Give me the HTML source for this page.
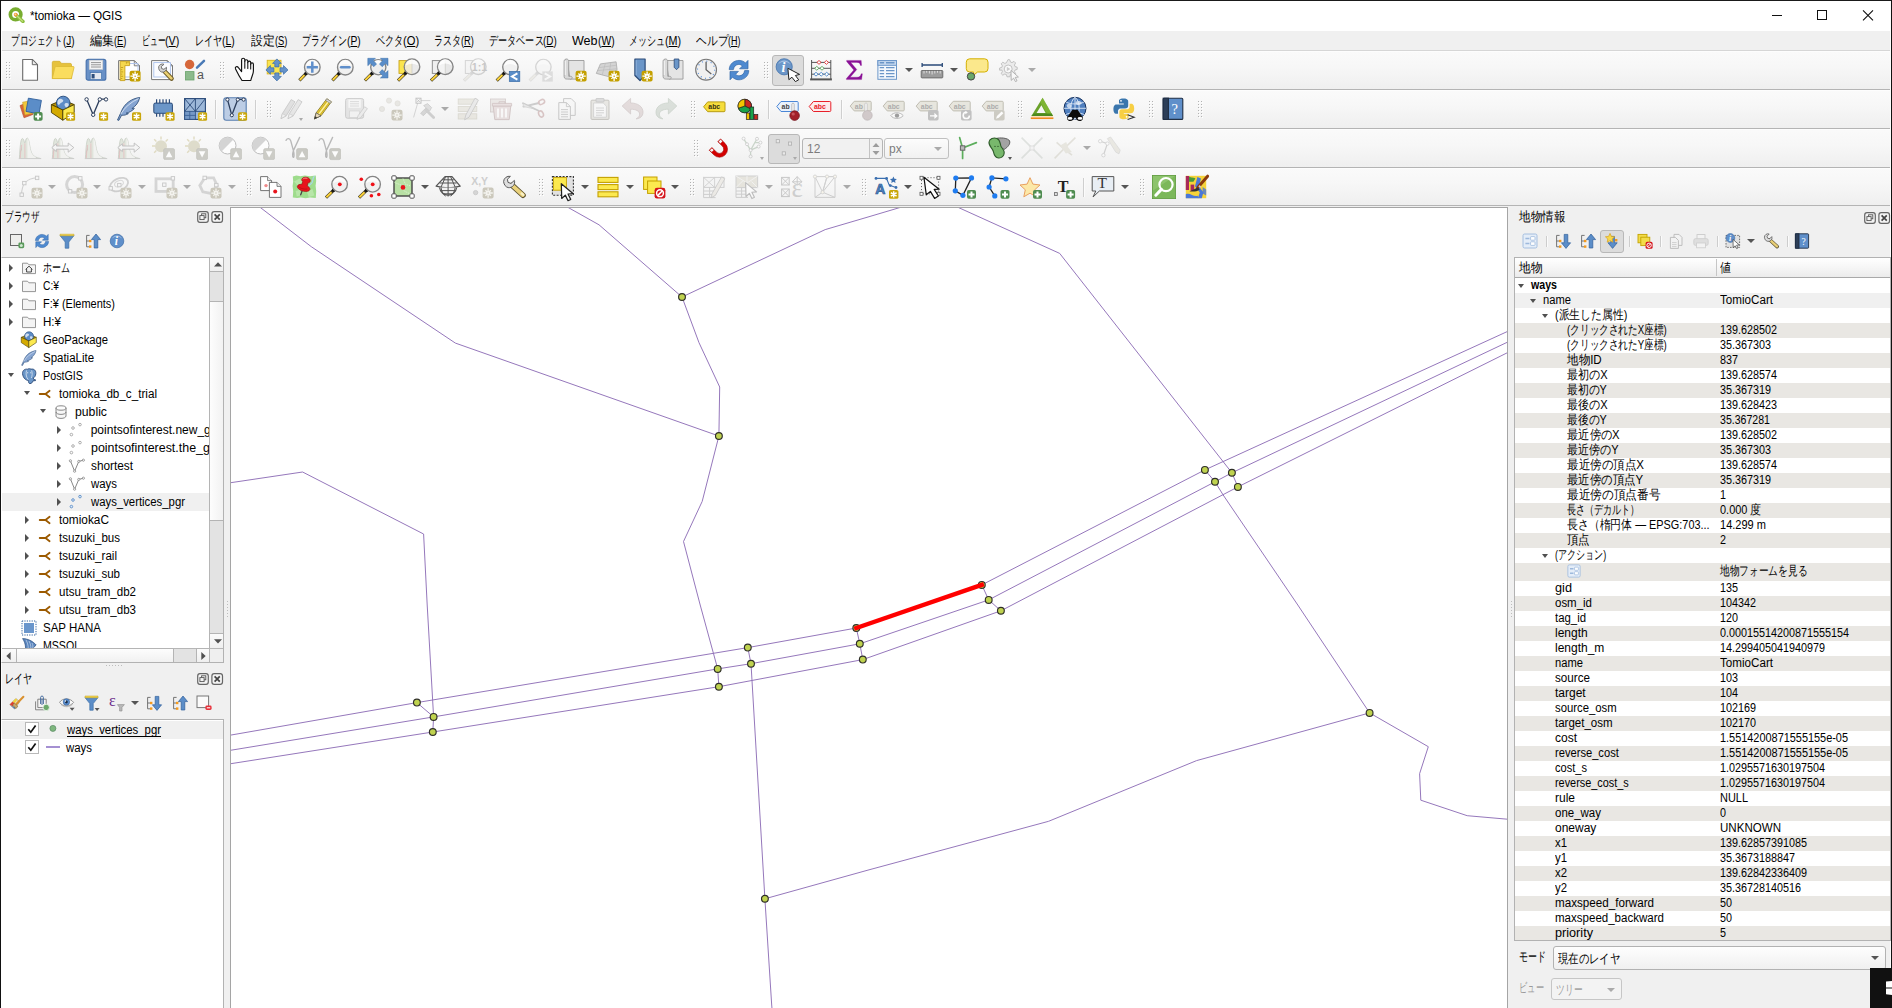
<!DOCTYPE html><html lang="ja"><head><meta charset="utf-8"><title>*tomioka — QGIS</title><style>
*{box-sizing:border-box;margin:0;padding:0}
html,body{width:1892px;height:1008px;overflow:hidden;background:#f0f0f0;font-family:"Liberation Sans",sans-serif;font-size:12px;color:#000}
.abs{position:absolute}
#win{position:absolute;left:0;top:0;width:1892px;height:1008px;overflow:hidden;background:#f0f0f0}
#title{position:absolute;left:0;top:0;width:1892px;height:31px;background:#fff}
#title .t{position:absolute;left:30px;top:9px;font-size:12.4px;line-height:15px;white-space:nowrap;letter-spacing:-0.1px}
#menu{position:absolute;left:0;top:31px;width:1892px;height:19px;background:#f0f0f0}
#menu span{position:absolute;top:1.5px;line-height:16px;font-size:13px;white-space:nowrap}
#menu u{text-decoration:underline;text-underline-offset:1px}
.tb{position:absolute;left:1px;width:1890px;height:39px;background:linear-gradient(#fafafa,#f7f7f7 40%,#efefef);border-bottom:1px solid #b4b4b4;border-top:1px solid #fdfdfd}
.hd{position:absolute;width:1px;height:1px;background:#b2b2b2;box-shadow:1px 1px #fff,3px 0px #b2b2b2,4px 1px #fff,0px 3px #b2b2b2,1px 4px #fff,3px 3px #b2b2b2,4px 4px #fff,0px 6px #b2b2b2,1px 7px #fff,3px 6px #b2b2b2,4px 7px #fff,0px 9px #b2b2b2,1px 10px #fff,3px 9px #b2b2b2,4px 10px #fff,0px 12px #b2b2b2,1px 13px #fff,3px 12px #b2b2b2,4px 13px #fff,0px 15px #b2b2b2,1px 16px #fff,3px 15px #b2b2b2,4px 16px #fff}
.vsep{position:absolute;width:1px;height:19px;background:#cfcfcf;box-shadow:1px 0 0 #fbfbfb}
.ic{position:absolute;width:24px;height:24px;overflow:visible}
.ic16{position:absolute;width:16px;height:16px;overflow:visible}
.dd{position:absolute;width:0;height:0;border-left:4px solid transparent;border-right:4px solid transparent;border-top:4px solid #555}
.dd.dis{border-top-color:#aaa}
.dds{position:absolute;width:0;height:0;border-left:2.5px solid transparent;border-right:2.5px solid transparent;border-top:3px solid #555}
.dds.dis{border-top-color:#aaa}
.pressed{position:absolute;background:#dcdcdc;border:1px solid #b8b8b8;border-radius:3px}
.ptitle{position:absolute;font-size:12px;line-height:14px;white-space:nowrap}
.pbtn{position:absolute;width:11px;height:11px;border:1.3px solid #6a6a6a;border-radius:2.5px}
.frame{position:absolute;background:#fff;border:1px solid #b2b2b2;overflow:hidden}
.row{position:absolute;left:0;height:18px;line-height:18px;white-space:nowrap;font-size:12px}
.row .tx{position:absolute;top:0;white-space:nowrap}
.tri-r{position:absolute;width:0;height:0;border-top:4px solid transparent;border-bottom:4px solid transparent;border-left:4.5px solid #505050}
.tri-d{position:absolute;width:0;height:0;border-left:3.800px solid transparent;border-right:3.800px solid transparent;border-top:4px solid #505050}
.sbv{position:absolute;background:#e3e3e3;border-left:1px solid #b6b6b6}
.thumb{position:absolute;background:linear-gradient(90deg,#fdfdfd,#f1f1f1);border:1px solid #b4b4b4}
.thumbh{position:absolute;background:linear-gradient(#fdfdfd,#f1f1f1);border:1px solid #b4b4b4}
.sbtn{position:absolute;background:linear-gradient(#fbfbfb,#efefef);border:1px solid #b4b4b4}
.chk{position:absolute;width:14px;height:14px;background:#fff;border:1px solid #b5b5b5}
.r15{position:absolute;left:0;width:100%;height:15px;line-height:15px;font-size:12px;white-space:nowrap}
.r15 .k{position:absolute;top:0}
.r15 .v{position:absolute;top:0;left:205px}
.alt{background:#e9e7e3}
.combo{position:absolute;border:1px solid #b2b2b2;border-radius:3px;background:linear-gradient(#fefefe,#f0f0f0);font-size:12px}
</style></head><body><div id="win">
<svg width="0" height="0" style="position:absolute"><defs>
<symbol id="i-new" viewBox="0 0 24 24" overflow="visible"><path d="M4.7 1.5h9.6l5.2 5.2v15.6H4.7z" fill="#fff" stroke="#6a6a6a" stroke-width="1.1" stroke-linejoin="round"/><path d="M14.3 1.5v5.2h5.2z" fill="#ececec" stroke="#6a6a6a" stroke-width="1" stroke-linejoin="round"/></symbol>
<symbol id="i-open" viewBox="0 0 24 24" overflow="visible"><path d="M1.3 4.6q0-1.3 1.3-1.3h5.6q0.900 0 1.300 0.800l0.700 1.300h9q1.300 0 1.300 1.300v13.800H1.300z" fill="#e6c23c" stroke="#d3ad2a" stroke-width="0.800"/><path d="M1.300 20.600L3.900 9.500q0.300-1 1.300-1h16.900q1.200 0 0.900 1.100L20.400 20.600z" fill="#fadd5e" stroke="#dcb935" stroke-width="0.800"/></symbol>
<symbol id="i-save" viewBox="0 0 24 24" overflow="visible"><rect x="2.2" y="1.4" width="19.6" height="20.8" rx="2" fill="#6890c6" stroke="#4a74ae" stroke-width="1.200"/><rect x="5.2" y="2.2" width="13.6" height="9.2" fill="#f4f4f4" stroke="#c9c9c9" stroke-width="0.6"/><path d="M7 4.6h10M7 6.8h10M7 9h10" stroke="#8a8a8a" stroke-width="0.9"/><rect x="6.2" y="14.6" width="11.4" height="7" fill="#e4e9f0" stroke="#3f6fa8" stroke-width="0.7"/><rect x="7.6" y="16" width="3" height="4.4" fill="#2e4f7c"/></symbol>
<symbol id="i-newLayout" viewBox="0 0 24 24" overflow="visible"><path d="M1.600 2.600h15.700l5.200 5.200v13.800H1.600z" fill="#fff" stroke="#777" stroke-width="1"/><path d="M17.300 2.600v5.200h5.200z" fill="#eee" stroke="#777" stroke-width="0.900"/><path d="M8 5.500h13v13.500H8" fill="none" stroke="#a9c0ec" stroke-width="0.900"/><path d="M3.200 3.300h9.400v4.300H7.900v15H3.200z" fill="#f5d84e" stroke="#c9a31c" stroke-width="0.900"/><path d="M3.900 9.500h2.200M3.900 11.700h1.400M3.900 13.900h2.200M3.900 16.100h1.400M3.900 18.300h2.200M3.900 20.500h1.400M9.400 4v1.700M11 4v1.200" stroke="#b08c10" stroke-width="0.700"/><rect x="12.6" y="12.8" width="11" height="10.8" rx="2" fill="#c4a000"/><path d="M18.10 18.20L22.80 18.20M18.10 18.20L20.79 20.89M18.10 18.20L18.10 22.90M18.10 18.20L15.41 20.89M18.10 18.20L13.40 18.20M18.10 18.20L15.41 15.51M18.10 18.20L18.10 13.50M18.10 18.20L20.79 15.51" stroke="#fff" stroke-width="1.3"/><circle cx="18.1" cy="18.200000000000003" r="2.2" fill="#fff"/><circle cx="18.1" cy="18.200000000000003" r="0.75" fill="#c4a000"/></symbol>
<symbol id="i-layoutMgr" viewBox="0 0 24 24" overflow="visible"><path d="M1.600 2.600h15.700l5.200 5.200v13.800H1.600z" fill="#fff" stroke="#777" stroke-width="1"/><path d="M17.300 2.600v5.200h5.200z" fill="#eee" stroke="#777" stroke-width="0.900"/><rect x="3.800" y="4.600" width="16.600" height="14.400" fill="#fbfcff" stroke="#a9c0ec" stroke-width="0.900"/><path d="M14.600 13.400l7 7.200" stroke="#6d5a24" stroke-width="4.400" stroke-linecap="round"/><path d="M14.800 13.600l6.600 6.800" stroke="#e9cf72" stroke-width="2.700" stroke-linecap="round"/><path d="M8.700 8.600a4 4 0 0 1 5.300-2.300l-2.600 2.100 0.300 2.200 2.200 0.700 2.600-2a4 4 0 0 1-5 4.700c-1.800-0.500-3.200-2.700-2.800-5.400z" fill="#d4d4d4" stroke="#6a6a6a" stroke-width="0.900"/></symbol>
<symbol id="i-styleMgr" viewBox="0 0 24 24" overflow="visible"><circle cx="6.600" cy="6.500" r="4.700" fill="#d6673a"/><rect x="2.400" y="13.600" width="8.600" height="8.400" fill="#8cba8c" stroke="#6aa36b" stroke-width="0.800"/><path d="M14 9.700l7-6.800" stroke="#4a7ab6" stroke-width="2.500" stroke-linecap="round"/><text x="14" y="21" font-size="12.500" font-family="Liberation Sans, sans-serif" fill="#555">a</text></symbol>
<symbol id="i-pan" viewBox="0 0 24 24" overflow="visible"><path d="M10 22.500h8.800c0.600-3.600 2.600-6 2.600-9.600V6.300c0-1.900-2.700-1.900-2.700 0V4.600c0-1.900-2.900-1.900-2.900 0V3.200c0-1.900-3-1.900-3 0V1.700c0-2-3.200-2-3.200 0v11.900L6.200 9.400c-1-1.600-3.500-0.500-2.700 1.300 1.600 3.300 3 6.400 6.500 11.800z" fill="#fff" stroke="#111" stroke-width="1.150" stroke-linejoin="round"/><path d="M12.800 3.200v7M15.800 4.600v5.800M18.700 6.300v4.700" stroke="#111" stroke-width="1.050" stroke-linecap="round"/></symbol>
<symbol id="i-panSel" viewBox="0 0 24 24" overflow="visible"><rect x="2.200" y="2.300" width="13.800" height="13.600" fill="#fbe54e" stroke="#d9b21e" stroke-width="0.900"/><g fill="#6592c9" stroke="#3b6ea8" stroke-width="0.7" stroke-linejoin="round"><path d="M11.900 0.900l4.400 4.500h-2.300v3.500h-4.200V5.400H7.500z"/><path d="M11.900 22.900l4.400-4.500h-2.300v-3.500h-4.200v3.500H7.500z"/><path d="M0.900 11.900l4.500-4.400v2.300h3.500v4.200H5.400v2.300z"/><path d="M23 11.900l-4.500-4.400v2.300H15v4.200h3.500v2.300z"/></g></symbol>
<symbol id="i-zoomIn" viewBox="0 0 24 24" overflow="visible"><g opacity="1"><path d="M8.43 15.07L1.4 22.3" stroke="#3a3420" stroke-width="3.1"/><path d="M6.46 17.09L1.75 21.95" stroke="#fbd23a" stroke-width="2"/><circle cx="8.23" cy="15.27" r="1.75" fill="#111"/><circle cx="14.3" cy="9.2" r="7.8" fill="#efefef" fill-opacity="0.96" stroke="#858585" stroke-width="1.35"/><path d="M8.100000000000001 7.999999999999999a6.199999999999999 6.199999999999999 0 0 1 12.399999999999999 0a11.8 11.8 0 0 0 -12.399999999999999 0" fill="#fff" opacity="0.8"/></g><path d="M14.300 3.600v11.200M8.700 9.200h11.200" stroke="#5f8fcb" stroke-width="2.500"/></symbol>
<symbol id="i-zoomOut" viewBox="0 0 24 24" overflow="visible"><g opacity="1"><path d="M8.43 15.07L1.4 22.3" stroke="#3a3420" stroke-width="3.1"/><path d="M6.46 17.09L1.75 21.95" stroke="#fbd23a" stroke-width="2"/><circle cx="8.23" cy="15.27" r="1.75" fill="#111"/><circle cx="14.3" cy="9.2" r="7.8" fill="#efefef" fill-opacity="0.96" stroke="#858585" stroke-width="1.35"/><path d="M8.100000000000001 7.999999999999999a6.199999999999999 6.199999999999999 0 0 1 12.399999999999999 0a11.8 11.8 0 0 0 -12.399999999999999 0" fill="#fff" opacity="0.8"/></g><path d="M10.100 9.200h8.400" stroke="#5f8fcb" stroke-width="2.400" stroke-linecap="round"/></symbol>
<symbol id="i-zoomFull" viewBox="0 0 24 24" overflow="visible"><g opacity="1"><path d="M8.57 14.93L0.9 22.5" stroke="#3a3420" stroke-width="3.1"/><path d="M6.42 17.05L1.25 22.15" stroke="#fbd23a" stroke-width="2"/><circle cx="8.37" cy="15.13" r="1.75" fill="#111"/><circle cx="14.3" cy="9.2" r="7.6" fill="#ededed" fill-opacity="0.96" stroke="#858585" stroke-width="1.35"/><path d="M8.3 7.999999999999999a6.0 6.0 0 0 1 12.0 0a11.6 11.6 0 0 0 -12.0 0" fill="#fff" opacity="0.8"/></g><g fill="#5a8dc8" stroke="#3b6ea8" stroke-width="0.500"><path d="M3.800 0.300h7.600l-2.200 2.200 3.400 3.400-2.800 2.800-3.400-3.400-2.600 2.400z"/><path d="M24 0.300v7.400l-2.400-2.400-3.400 3.400-2.800-2.800 3.400-3.400-2.400-2.200z"/><path d="M24 20v-7.400l-2.400 2.400-3.400-3.400-2.800 2.800 3.400 3.400-2.400 2.200z"/></g></symbol>
<symbol id="i-zoomSel" viewBox="0 0 24 24" overflow="visible"><rect x="2" y="2.600" width="9" height="12.800" fill="#fbe54e" stroke="#c9a31c" stroke-width="0.900"/><g opacity="1"><path d="M9.13 14.67L1 22.6" stroke="#3a3420" stroke-width="3.1"/><path d="M6.85 16.89L1.35 22.25" stroke="#fbd23a" stroke-width="2"/><circle cx="8.93" cy="14.87" r="1.75" fill="#111"/><circle cx="15" cy="8.8" r="7.8" fill="#e9e9e9" fill-opacity="0.96" stroke="#858585" stroke-width="1.35"/><path d="M15 1.7000000000000008A7.1 7.1 0 0 0 15 15.900000000000002z" fill="#f1ead0"/><path d="M15 1.7000000000000008v14.2" stroke="#c9c9c4" stroke-width="0.7"/><path d="M8.8 7.6000000000000005a6.199999999999999 6.199999999999999 0 0 1 12.399999999999999 0a11.8 11.8 0 0 0 -12.399999999999999 0" fill="#fff" opacity="0.8"/></g></symbol>
<symbol id="i-zoomLayer" viewBox="0 0 24 24" overflow="visible"><rect x="2.300" y="2.600" width="8" height="12.800" fill="#efefef" stroke="#858585" stroke-width="0.900"/><g opacity="1"><path d="M9.43 14.57L1 22.6" stroke="#3a3420" stroke-width="3.1"/><path d="M7.07 16.82L1.35 22.25" stroke="#fbd23a" stroke-width="2"/><circle cx="9.23" cy="14.77" r="1.75" fill="#111"/><circle cx="15.3" cy="8.7" r="7.8" fill="#e6e6e6" fill-opacity="0.96" stroke="#858585" stroke-width="1.35"/><path d="M15.3 1.5999999999999994A7.1 7.1 0 0 0 15.3 15.8z" fill="#f3f3f3"/><path d="M15.3 1.5999999999999994v14.2" stroke="#c9c9c4" stroke-width="0.7"/><path d="M9.100000000000001 7.499999999999999a6.199999999999999 6.199999999999999 0 0 1 12.399999999999999 0a11.8 11.8 0 0 0 -12.399999999999999 0" fill="#fff" opacity="0.8"/></g></symbol>
<symbol id="i-zoomNative" viewBox="0 0 24 24" overflow="visible"><g opacity="0.330"><rect x="2.300" y="2.600" width="8" height="12.800" fill="#efefef" stroke="#858585" stroke-width="0.900"/><g opacity="1"><path d="M9.43 14.57L1 22.6" stroke="#aaa" stroke-width="3.1"/><path d="M7.07 16.82L1.35 22.25" stroke="#d9d6c8" stroke-width="2"/><circle cx="9.23" cy="14.77" r="1.75" fill="#999"/><circle cx="15.3" cy="8.7" r="7.8" fill="#f3f3f3" fill-opacity="0.96" stroke="#858585" stroke-width="1.35"/><path d="M9.100000000000001 7.499999999999999a6.199999999999999 6.199999999999999 0 0 1 12.399999999999999 0a11.8 11.8 0 0 0 -12.399999999999999 0" fill="#fff" opacity="0.8"/></g><text x="8.800" y="12.500" font-size="10.600" font-weight="bold" font-family="Liberation Sans, sans-serif" fill="#666">1:1</text></g></symbol>
<symbol id="i-zoomLast" viewBox="0 0 24 24" overflow="visible"><g opacity="1"><path d="M8.60 14.90L0.7 22.6" stroke="#3a3420" stroke-width="3.1"/><path d="M6.39 17.05L1.05 22.25" stroke="#fbd23a" stroke-width="2"/><circle cx="8.40" cy="15.10" r="1.75" fill="#111"/><circle cx="14.4" cy="9.1" r="7.7" fill="#efefef" fill-opacity="0.96" stroke="#858585" stroke-width="1.35"/><path d="M8.3 7.8999999999999995a6.1 6.1 0 0 1 12.2 0a11.7 11.7 0 0 0 -12.2 0" fill="#fff" opacity="0.8"/></g><rect x="13.300" y="13.400" width="10.500" height="10.200" fill="#5a8dc8" stroke="#3b6ea8" stroke-width="0.700"/><path d="M21.400 15.300l-5.400 3.200 5.400 3.200" fill="none" stroke="#fff" stroke-width="2"/></symbol>
<symbol id="i-zoomNext" viewBox="0 0 24 24" overflow="visible"><g opacity="0.300"><g opacity="1"><path d="M8.60 14.90L0.7 22.6" stroke="#aaa" stroke-width="3.1"/><path d="M6.39 17.05L1.05 22.25" stroke="#d9d6c8" stroke-width="2"/><circle cx="8.40" cy="15.10" r="1.75" fill="#999"/><circle cx="14.4" cy="9.1" r="7.7" fill="#f3f3f3" fill-opacity="0.96" stroke="#858585" stroke-width="1.35"/><path d="M8.3 7.8999999999999995a6.1 6.1 0 0 1 12.2 0a11.7 11.7 0 0 0 -12.2 0" fill="#fff" opacity="0.8"/></g><rect x="13.300" y="13.400" width="10.500" height="10.200" fill="#a9a9a9"/><path d="M15.700 15.300l5.400 3.200-5.400 3.200" fill="none" stroke="#fff" stroke-width="2"/></g></symbol>
<symbol id="i-newMap" viewBox="0 0 24 24" overflow="visible"><path d="M4 2.500h17v18.600H7z" fill="#e4e4e4" stroke="#9a9a9a" stroke-width="0.900"/><path d="M3.400 1c-2.300 0-2.300 2.400-2.300 2.400v15c0 2.500 2 2.700 3.400 2.700h3c2.300 0 2.300-2.800 0-2.800H5.700V3.400c0-1.200-0.700-2.400-2.300-2.400z" fill="#d9d9d9" stroke="#9a9a9a" stroke-width="0.900"/><path d="M2.300 3v14" stroke="#f4f4f4" stroke-width="1"/><rect x="12.6" y="12.8" width="11" height="10.8" rx="2" fill="#c4a000"/><path d="M18.10 18.20L22.80 18.20M18.10 18.20L20.79 20.89M18.10 18.20L18.10 22.90M18.10 18.20L15.41 20.89M18.10 18.20L13.40 18.20M18.10 18.20L15.41 15.51M18.10 18.20L18.10 13.50M18.10 18.20L20.79 15.51" stroke="#fff" stroke-width="1.3"/><circle cx="18.1" cy="18.200000000000003" r="2.2" fill="#fff"/><circle cx="18.1" cy="18.200000000000003" r="0.75" fill="#c4a000"/></symbol>
<symbol id="i-new3D" viewBox="0 0 24 24" overflow="visible"><path d="M0.300 15.400L4.400 5.900l15.700-2.100 1 7.900-8.900 6.800z" fill="#d4d4d4" stroke="#aaa" stroke-width="0.800"/><path d="M2.800 9.600l17.800-2.400M1.600 12.600l19-1.800M9.400 5.200L6.200 16.900M14.800 4.500l-2 13" fill="none" stroke="#b9b9b9" stroke-width="0.600"/><rect x="12.6" y="12.8" width="11" height="10.8" rx="2" fill="#c4a000"/><path d="M18.10 18.20L22.80 18.20M18.10 18.20L20.79 20.89M18.10 18.20L18.10 22.90M18.10 18.20L15.41 20.89M18.10 18.20L13.40 18.20M18.10 18.20L15.41 15.51M18.10 18.20L18.10 13.50M18.10 18.20L20.79 15.51" stroke="#fff" stroke-width="1.3"/><circle cx="18.1" cy="18.200000000000003" r="2.2" fill="#fff"/><circle cx="18.1" cy="18.200000000000003" r="0.75" fill="#c4a000"/></symbol>
<symbol id="i-newBookmark" viewBox="0 0 24 24" overflow="visible"><path d="M5.900 1h10.200v16.500L11 22.500 5.900 17.500z" fill="#6b96c8" stroke="#2a4a78" stroke-width="1.200" stroke-linejoin="round"/><path d="M7.200 2.200v14.800" stroke="#8fb1da" stroke-width="1"/><rect x="12.6" y="12.8" width="11" height="10.8" rx="2" fill="#c4a000"/><path d="M18.10 18.20L22.80 18.20M18.10 18.20L20.79 20.89M18.10 18.20L18.10 22.90M18.10 18.20L15.41 20.89M18.10 18.20L13.40 18.20M18.10 18.20L15.41 15.51M18.10 18.20L18.10 13.50M18.10 18.20L20.79 15.51" stroke="#fff" stroke-width="1.3"/><circle cx="18.1" cy="18.200000000000003" r="2.2" fill="#fff"/><circle cx="18.1" cy="18.200000000000003" r="0.75" fill="#c4a000"/></symbol>
<symbol id="i-showBookmarks" viewBox="0 0 24 24" overflow="visible"><path d="M4 2.500h17v18.600H7z" fill="#e4e4e4" stroke="#9a9a9a" stroke-width="0.900"/><path d="M3.400 1c-2.300 0-2.300 2.400-2.300 2.400v15c0 2.500 2 2.700 3.400 2.700h3c2.300 0 2.300-2.800 0-2.800H5.700V3.400c0-1.200-0.700-2.400-2.300-2.400z" fill="#d9d9d9" stroke="#9a9a9a" stroke-width="0.900"/><path d="M2.300 3v14" stroke="#f4f4f4" stroke-width="1"/><path d="M12.200 1h4.700v8.300l-2.350 2.400-2.350-2.400z" fill="#6b96c8" stroke="#2a4a78" stroke-width="0.800"/></symbol>
<symbol id="i-temporal" viewBox="0 0 24 24" overflow="visible"><circle cx="12.100" cy="11.700" r="10.400" fill="#f0f0f0" stroke="#777" stroke-width="1.100"/><circle cx="12.100" cy="11.700" r="8.600" fill="none" stroke="#4a86d8" stroke-width="1.100" stroke-dasharray="1 3.503"/><path d="M12.100 3.800v8l5.200 4.200" fill="none" stroke="#606060" stroke-width="1.300"/></symbol>
<symbol id="i-refresh" viewBox="0 0 24 24" overflow="visible"><path d="M2.2 11.6C2.4 5.6 7.4 2.4 12 2.4c3 0 5 1.2 6.4 2.6l2.6-2.6v8.4h-8.4l2.8-2.8c-1-1-2.2-1.6-3.6-1.6-2.8 0-5 2-5.4 5.2z" fill="#4f8ad0" stroke="#2f65a6" stroke-width="0.7"/><path d="M21.8 12.6c-0.2 6-5.2 9.2-9.8 9.2-3 0-5-1.2-6.4-2.6L3 21.8v-8.4h8.4l-2.8 2.8c1 1 2.2 1.6 3.6 1.6 2.8 0 5-2 5.400-5.200z" fill="#4f8ad0" stroke="#2f65a6" stroke-width="0.7"/></symbol>
<symbol id="i-identify" viewBox="0 0 24 24" overflow="visible"><circle cx="8.200" cy="8.800" r="8.100" fill="#6b96c8" stroke="#4574ad" stroke-width="0.800"/><path d="M2.200 6a6.800 6.800 0 0 1 12 0a10 10 0 0 0-12 0" fill="#b4cbe8" opacity="0.800"/><text x="5.600" y="14" font-size="14" font-style="italic" font-weight="bold" font-family="Liberation Serif, serif" fill="#fff">i</text><path d="M11.900 10.300l1 11.400 3-2.500 3.500 4.400 3.300-1.800-3.300-4.300 4.200-1.100z" fill="#fff" stroke="#222" stroke-width="1" stroke-linejoin="round"/></symbol>
<symbol id="i-fieldCalc" viewBox="0 0 24 24" overflow="visible"><path d="M1.100 21.400h21.800" stroke="#555" stroke-width="2"/><path d="M2.600 2v19M21.800 2v19M2.600 4.400h19.200M2.600 10.300h19.200M2.600 16.200h19.200" stroke="#555" stroke-width="1" fill="none"/><path d="M7.9 4.4l2.100-1.900 2.100 1.900-2.100 1.900z" fill="#fff" stroke="#d33" stroke-width="0.900"/><path d="M15.299999999999999 4.4l2.100-1.900 2.100 1.900-2.100 1.900z" fill="#fff" stroke="#d33" stroke-width="0.900"/><path d="M5.699999999999999 10.3l2.100-1.900 2.100 1.900-2.100 1.900z" fill="#fff" stroke="#5aa55a" stroke-width="0.900"/><path d="M10.9 10.3l2.100-1.900 2.100 1.900-2.100 1.900z" fill="#fff" stroke="#5aa55a" stroke-width="0.900"/><path d="M4.9 16.2l2.100-1.900 2.100 1.900-2.100 1.900z" fill="#fff" stroke="#4a86c8" stroke-width="0.900"/><path d="M10.1 16.2l2.100-1.900 2.100 1.900-2.100 1.900z" fill="#fff" stroke="#4a86c8" stroke-width="0.900"/><path d="M15.6 16.2l2.100-1.900 2.100 1.900-2.100 1.900z" fill="#fff" stroke="#4a86c8" stroke-width="0.900"/></symbol>
<symbol id="i-sigma" viewBox="0 0 24 24" overflow="visible"><path d="M4.600 2.400h14.600l0.400 5h-1.200c-0.400-2.400-1.400-3-3.600-3H8.800l6 7.200-6.600 7.600h6.800c2.600 0 3.600-1 4.200-3.400h1.200l-0.800 5.800H4.400v-1l7.400-8.600-7.200-8.600z" fill="#8a1196" stroke="#8a1196" stroke-width="0.300"/></symbol>
<symbol id="i-attrTable" viewBox="0 0 24 24" overflow="visible"><rect x="2.900" y="2.600" width="18.600" height="18.700" fill="#f4f8fd" stroke="#6b96c8" stroke-width="1"/><rect x="2.900" y="2.600" width="18.600" height="4.700" fill="#c8daf0" stroke="#6b96c8" stroke-width="1"/><path d="M4.700 4.700h4.400M11 4.700h8.500" stroke="#6b96c8" stroke-width="1.500"/><path d="M4.700 9.700h4.400M11 9.700h8.500M4.700 12.700h4.400M11 12.700h8.500M4.700 15.700h4.400M11 15.700h8.500M4.700 18.700h4.400M11 18.700h8.500" stroke="#6b96c8" stroke-width="1.200"/></symbol>
<symbol id="i-measure" viewBox="0 0 24 24" overflow="visible"><path d="M2.100 5v3.900M22.300 5v3.900M2.100 7h20.200" stroke="#2a4a78" stroke-width="1.300"/><rect x="1.200" y="12.500" width="21.600" height="7.400" rx="0.800" fill="#9c9c9c" stroke="#666" stroke-width="0.900"/><path d="M4 12.900v2.600M6.700 12.900v1.800M9.400 12.900v2.600M12.100 12.900v3.600M14.800 12.900v2.600M17.500 12.900v1.800M20.200 12.900v2.600" stroke="#eee" stroke-width="0.800"/></symbol>
<symbol id="i-mapTips" viewBox="0 0 24 24" overflow="visible"><path d="M4.700 0.800h14.900q3.400 0 3.400 3.400v6.400q0 3.400-3.400 3.400h-7l-5.600 4.400 1.600-4.400h-3.900q-3.400 0-3.400-3.400V4.200q0-3.400 3.400-3.400z" fill="#fbe88c" stroke="#d4b000" stroke-width="1"/><circle cx="6" cy="18.400" r="3.700" fill="#6aa86a" stroke="#444" stroke-width="1"/></symbol>
<symbol id="i-actions" viewBox="0 0 24 24" overflow="visible"><g opacity="0.450"><path d="M10 1.600l1.800 0.200 0.600 2.200 1.600 0.600 2-1.200 1.600 1.600-1.200 2 0.600 1.600 2.200 0.600v2.200l-2.200 0.600-0.600 1.600 1.200 2-1.600 1.600-2-1.200-1.600 0.600-0.600 2.200H9l-0.600-2.200-1.600-0.600-2 1.200-1.600-1.600 1.200-2-0.600-1.600L1.600 12.200V10l2.200-0.600 0.600-1.600-1.200-2 1.600-1.600 2 1.200 1.600-0.600z" fill="#ddd" stroke="#777" stroke-width="0.900"/><circle cx="10.200" cy="11" r="4" fill="#fff" stroke="#777" stroke-width="0.900"/><path d="M8.800 8.800v4.400l3.600-2.200z" fill="#999"/><path d="M13 12.400l0.200 10 2.400-2.200 1.800 3.400 1.600-0.800-1.800-3.400 3.200-0.400z" fill="#fff" stroke="#555" stroke-width="0.900" stroke-linejoin="round"/></g></symbol>
<symbol id="i-dsm" viewBox="0 0 24 24" overflow="visible"><path d="M1 8.600l9-3.600 4 12.400-9 3.400z" fill="#d8653a" stroke="#b24d28" stroke-width="0.600"/><path d="M3.600 5.200l9.400-1.800 2.600 12.400-9.600 2.200z" fill="#f2c73c" stroke="#caa023" stroke-width="0.600"/><path d="M9.400 1.200l13 2.200-2.400 13.600-13-2.600z" fill="#5b8dc8" stroke="#2f5f9b" stroke-width="0.900"/><rect x="14.6" y="15" width="9" height="8.8" rx="1.8" fill="#4f8c50"/><path d="M19.1 16.4v6M16.1 19.4h6" stroke="#fff" stroke-width="2"/></symbol>
<symbol id="i-newGpkg" viewBox="0 0 24 24" overflow="visible"><path d="M0.400 7.600L11.800 2.800l11.400 4.800-11.400 5.400z" fill="#b8930a" stroke="#4a3c00" stroke-width="0.900" stroke-linejoin="round"/><circle cx="12.200" cy="6" r="6.800" fill="#5d8cc6" stroke="#24487a" stroke-width="0.900"/><path d="M7.600 2.600c1.800-1.600 3.400-0.400 4.400 0.400s-0.400 2.400-1.800 2.800-1.400 2.600-2.800 2-1.200-3.800 0.200-5.200zM14 6.400c1.200-0.800 3-0.600 3.600 0.400s-0.600 3.200-2 3.400-2.800-3-1.600-3.800z" fill="#e4ecf6" opacity="0.850"/><path d="M0.400 7.600l11.400 5.400v10.200L0.400 15.600z" fill="#d4aa00" stroke="#4a3c00" stroke-width="0.900" stroke-linejoin="round"/><path d="M23.200 7.600l-11.400 5.400v10.200l11.400-7.600z" fill="#fce94f" stroke="#4a3c00" stroke-width="0.900" stroke-linejoin="round"/><rect x="15" y="15.2" width="9.1" height="8.6" rx="1.6" fill="#c9a60a"/><path d="M19.55 16.3v6.4M16.650000000000002 17.85l5.8 3.3M22.45 17.85l-5.8 3.3" stroke="#fff" stroke-width="1.5"/></symbol>
<symbol id="i-newVector" viewBox="0 0 24 24" overflow="visible"><path d="M2.600 2.200l6.600 15.600 6.600-15.600 6.400 0" fill="none" stroke="#2c3e5c" stroke-width="1.300"/><g fill="#fff" stroke="#2c3e5c" stroke-width="1"><circle cx="2.600" cy="2.400" r="1.700"/><circle cx="9.200" cy="17.800" r="1.700"/><circle cx="15.800" cy="2.400" r="1.700"/><circle cx="22" cy="2.400" r="1.700"/></g><rect x="15" y="15.2" width="9.1" height="8.6" rx="1.6" fill="#c9a60a"/><path d="M19.55 16.3v6.4M16.650000000000002 17.85l5.8 3.3M22.45 17.85l-5.8 3.3" stroke="#fff" stroke-width="1.5"/></symbol>
<symbol id="i-newSpatialite" viewBox="0 0 24 24" overflow="visible"><path d="M22.700 0.500C15 1.500 7.400 6 4 15.300L0.500 23l1.300 0.400 2.800-5.200c2.400 0.300 4.600-0.300 6.800-1.600-0.900 0-1.600-0.100-2.300-0.500 3.300-0.600 6-2.200 8.300-4.600-0.900 0.200-1.700 0.200-2.500 0 3.900-2.300 6.700-6 7.800-11z" fill="#86a5d2" stroke="#34557f" stroke-width="0.900" stroke-linejoin="round"/><path d="M3.800 17C8 10 14 5 21.600 1.600" fill="none" stroke="#dbe6f4" stroke-width="0.900"/><rect x="15" y="15.2" width="9.1" height="8.6" rx="1.6" fill="#c9a60a"/><path d="M19.55 16.3v6.4M16.650000000000002 17.85l5.8 3.3M22.45 17.85l-5.8 3.3" stroke="#fff" stroke-width="1.5"/></symbol>
<symbol id="i-newMemory" viewBox="0 0 24 24" overflow="visible"><path d="M5.600 2.300v3.800M8.800 2.300v3.800M12 2.300v3.800M15.200 2.300v3.800M18.400 2.300v3.800M5.600 16.300v3.500M8.800 16.300v3.500M12 16.300v3.500" stroke="#2a4a78" stroke-width="1.200"/><rect x="2.800" y="6.100" width="18.600" height="10.200" rx="1.400" fill="#6b96c8" stroke="#2a4a78" stroke-width="1"/><rect x="14.5" y="15.2" width="9.1" height="8.6" rx="1.6" fill="#c9a60a"/><path d="M19.05 16.3v6.4M16.150000000000002 17.85l5.8 3.3M21.95 17.85l-5.8 3.3" stroke="#fff" stroke-width="1.5"/></symbol>
<symbol id="i-newMesh" viewBox="0 0 24 24" overflow="visible"><rect x="1.600" y="1.600" width="20.800" height="20.800" fill="#9db8d9" stroke="#2a4a78" stroke-width="1.100"/><path d="M1.600 14.400h20.800M12.400 1.600v20.800M1.600 1.600l10.800 12.800M12.400 1.600L1.600 14.400M12.400 14.400l10-12.800M6.800 14.400v8M1.600 18.400h10.800" fill="none" stroke="#2a4a78" stroke-width="0.900"/><rect x="1.600" y="14.400" width="10.800" height="8" fill="#4d7ab4" opacity="0.500"/><rect x="15" y="15.2" width="9.1" height="8.6" rx="1.6" fill="#c9a60a"/><path d="M19.55 16.3v6.4M16.650000000000002 17.85l5.8 3.3M22.45 17.85l-5.8 3.3" stroke="#fff" stroke-width="1.5"/></symbol>
<symbol id="i-newVirtual" viewBox="0 0 24 24" overflow="visible"><rect x="0.800" y="0.800" width="22.400" height="22.400" rx="2.400" fill="#bccde5" stroke="#5a7fb0" stroke-width="1.100"/><path d="M2 2h20v20H2z" fill="url(#gvl)"/><path d="M4.400 2.400l4.400 15.800 6-15.800 5.800 0" fill="none" stroke="#2c3e5c" stroke-width="1.300"/><g fill="#fff" stroke="#2c3e5c" stroke-width="1"><circle cx="4.400" cy="2.600" r="1.600"/><circle cx="8.800" cy="18.200" r="1.600"/><circle cx="14.800" cy="2.600" r="1.600"/><circle cx="20.600" cy="2.600" r="1.600"/></g><rect x="15" y="15.2" width="9.1" height="8.6" rx="1.6" fill="#c9a60a"/><path d="M19.55 16.3v6.4M16.650000000000002 17.85l5.8 3.3M22.45 17.85l-5.8 3.3" stroke="#fff" stroke-width="1.5"/></symbol>
<symbol id="i-currentEdits" viewBox="0 0 24 24" overflow="visible"><g opacity="0.380"><path d="M2 21.600l1.400-5L12.200 2.600l3.800 2.200L7.200 18.800z" fill="#bdbdbd" stroke="#777" stroke-width="0.800"/><path d="M9 21.600l1.400-5L19.200 2.600l3.800 2.200-8.800 14z" fill="#cfcfcf" stroke="#777" stroke-width="0.800"/><path d="M2 21.600l1.400-5 3.800 2.200zM9 21.600l1.400-5 3.800 2.200z" fill="#eee" stroke="#777" stroke-width="0.600"/></g></symbol>
<symbol id="i-toggleEdit" viewBox="0 0 24 24" overflow="visible"><path d="M3.400 22l1.800-6.200L15.800 1.800l4.600 3-10.400 14z" fill="#f0d43c" stroke="#8a7a2c" stroke-width="0.900" stroke-linejoin="round"/><path d="M8 17.200L18.200 3.400" stroke="#fbf0a8" stroke-width="1.300"/><path d="M6.600 16.400L17 2.600M9 18L19.400 4.200" stroke="#b79b1e" stroke-width="0.700"/><path d="M3.400 22l1.800-6.200 4.800 3z" fill="#e9d9b8" stroke="#555" stroke-width="0.800"/><path d="M3.400 22l0.800-2.800 2 1.200z" fill="#333"/><path d="M15.800 1.800l4.600 3-1.200 1.600-4.600-3z" fill="#d9d9d9" stroke="#777" stroke-width="0.600"/></symbol>
<symbol id="i-saveEdits" viewBox="0 0 24 24" overflow="visible"><g opacity="0.380"><rect x="1.600" y="1.600" width="18" height="19.600" rx="1.800" fill="#c9c9c9" stroke="#8a8a8a" stroke-width="1"/><rect x="4.400" y="2.400" width="12.400" height="8.400" fill="#f4f4f4"/><path d="M6 4.600h9M6 6.800h9M6 9h9" stroke="#999" stroke-width="0.800"/><rect x="5.600" y="14" width="10" height="6.400" fill="#eee" stroke="#999" stroke-width="0.600"/><path d="M13 22.400l1-3.600 6.600-9 2.800 1.800-6.600 9z" fill="#ddd" stroke="#888" stroke-width="0.800"/></g></symbol>
<symbol id="i-addFeature" viewBox="0 0 24 24" overflow="visible"><g opacity="0.450"><circle cx="3" cy="12" r="2.600" fill="#d5d3cb" stroke="#bdbab0" stroke-width="0.600"/><circle cx="10" cy="3.600" r="2.600" fill="#d5d3cb" stroke="#bdbab0" stroke-width="0.600"/><circle cx="18.600" cy="6.400" r="2.600" fill="#d5d3cb" stroke="#bdbab0" stroke-width="0.600"/></g><rect x="12.5" y="12.7" width="11" height="10.8" rx="2" fill="#cbc8bc"/><path d="M18.00 18.10L22.70 18.10M18.00 18.10L20.69 20.79M18.00 18.10L18.00 22.80M18.00 18.10L15.31 20.79M18.00 18.10L13.30 18.10M18.00 18.10L15.31 15.41M18.00 18.10L18.00 13.40M18.00 18.10L20.69 15.41" stroke="#f4f3ef" stroke-width="1.3"/><circle cx="18.0" cy="18.1" r="2.2" fill="#f4f3ef"/><circle cx="18.0" cy="18.1" r="0.75" fill="#cbc8bc"/></symbol>
<symbol id="i-vertexTool" viewBox="0 0 24 24" overflow="visible"><g opacity="0.400"><path d="M1.600 20.400L6.400 3.600h12" fill="none" stroke="#999" stroke-width="0.900"/><rect x="4" y="1.200" width="5" height="5" fill="#fff" stroke="#666" stroke-width="0.900"/><path d="M5 2.200l3 3M8 2.200l-3 3" stroke="#666" stroke-width="0.800"/><path d="M8.600 16.200l6.800-6.600 2.600 2.600-6.800 6.600z" fill="#a8a8a8" stroke="#777" stroke-width="0.600"/><path d="M11.600 8.600l4-2 4 4-2 3.600z" fill="#bbb" stroke="#777" stroke-width="0.600"/><path d="M14 13l7.600 7.600" stroke="#999" stroke-width="2.800" stroke-linecap="round"/></g></symbol>
<symbol id="i-modifyAttr" viewBox="0 0 24 24" overflow="visible"><g opacity="0.420"><rect x="2.200" y="2" width="18.600" height="5.200" fill="#d9d6c8" stroke="#b5b19f" stroke-width="0.800"/><rect x="2.200" y="9.400" width="18.600" height="5.200" fill="#d9d6c8" stroke="#b5b19f" stroke-width="0.800"/><rect x="2.200" y="16.800" width="18.600" height="5.200" fill="#d9d6c8" stroke="#b5b19f" stroke-width="0.800"/><path d="M8.600 22.800l1.200-4.800L19 1.200l3.400 2-9.400 17z" fill="#d8d8d8" stroke="#8a8a8a" stroke-width="0.800"/></g></symbol>
<symbol id="i-deleteSel" viewBox="0 0 24 24" overflow="visible"><g opacity="0.450"><rect x="2.600" y="2" width="15" height="13" fill="#dcd6d2" stroke="#a99" stroke-width="0.800"/><path d="M5.200 9h17.600l-1.600 13.600H6.800z" fill="#d9c6c6" stroke="#a58888" stroke-width="0.900"/><path d="M4.400 6.400h19.200v2.600H4.400z" fill="#d9c6c6" stroke="#a58888" stroke-width="0.800"/><path d="M10 11.400v9M14 11.400v9M18 11.400v9" stroke="#fff" stroke-width="1.800"/><path d="M11 6.400V4.800h6v1.600" fill="none" stroke="#a58888" stroke-width="0.900"/></g></symbol>
<symbol id="i-cut" viewBox="0 0 24 24" overflow="visible"><g opacity="0.450"><path d="M1 6.200l15.600 7.600M1.400 9.600L17 6" stroke="#999" stroke-width="1.800" stroke-linecap="round"/><path d="M1 6.200l12 5.800-11.600-2.400z" fill="#d4d4d4" stroke="#999" stroke-width="0.600"/><ellipse cx="19.600" cy="5" rx="3.200" ry="2.200" transform="rotate(-28 19.600 5)" fill="none" stroke="#b58a8a" stroke-width="1.500"/><ellipse cx="19" cy="17" rx="2.200" ry="3.200" transform="rotate(-28 19 17)" fill="none" stroke="#b58a8a" stroke-width="1.500"/></g></symbol>
<symbol id="i-copyF" viewBox="0 0 24 24" overflow="visible"><g opacity="0.450"><path d="M8.600 1.600h7.600l4 4v12.800H8.600z" fill="#f6f6f6" stroke="#888" stroke-width="0.900"/><path d="M3.800 5.600h7.600l4 4v12.800H3.800z" fill="#f6f6f6" stroke="#888" stroke-width="0.900"/><path d="M11.400 5.600v4h4M6 12.600h7M6 15h7M6 17.400h7M6 19.800h7" fill="none" stroke="#888" stroke-width="0.800"/></g></symbol>
<symbol id="i-pasteF" viewBox="0 0 24 24" overflow="visible"><g opacity="0.450"><rect x="3" y="3.200" width="18" height="19.200" rx="1" fill="#d5d3cb" stroke="#8f8c82" stroke-width="1"/><rect x="8" y="1.400" width="8" height="3.600" rx="0.800" fill="#bbb" stroke="#888" stroke-width="0.800"/><path d="M5.600 6h9.600l3.200 3.200v11H5.600z" fill="#f8f8f8" stroke="#999" stroke-width="0.700"/><path d="M8 11h8M8 13.400h8M8 15.800h8M8 18.200h6" stroke="#999" stroke-width="0.800"/></g></symbol>
<symbol id="i-undo" viewBox="0 0 24 24" overflow="visible"><g opacity="0.450"><path d="M1.200 9l8.400-7.600v4.600c7.200 0 12.400 3.600 12.400 9.200 0 4-3 6.400-6.800 6.600 2.400-1.200 3.400-2.800 3.400-4.600 0-3-3.400-5-9-5v4.800z" fill="#cbb" stroke="#a99" stroke-width="0.800"/></g></symbol>
<symbol id="i-redo" viewBox="0 0 24 24" overflow="visible"><g opacity="0.450"><path d="M22.800 9l-8.400-7.600v4.600c-7.200 0-12.400 3.600-12.400 9.200 0 4 3 6.400 6.800 6.600-2.400-1.200-3.400-2.800-3.400-4.600 0-3 3.400-5 9-5v4.800z" fill="#b9c4b9" stroke="#9a9" stroke-width="0.800"/></g></symbol>
<symbol id="i-label" viewBox="0 0 24 24" overflow="visible"><g opacity="1"><path d="M1.6 9.8l4.1160000000000005 -4.9h16.284q1 0 1 1v7.800000000000001q0 1-1 1h-16.284z" fill="#f6dd3c" stroke="#b79c12" stroke-width="1"/><text x="6.316000000000001" y="12.4" font-size="6.9" font-weight="bold" font-family="Liberation Sans, sans-serif" fill="#3a3410">abc</text></g></symbol>
<symbol id="i-diagram" viewBox="0 0 24 24" overflow="visible"><circle cx="8.800" cy="9" r="6.700" fill="#f2c500" stroke="#222" stroke-width="0.900"/><path d="M8.800 9V2.300a6.700 6.700 0 0 1 6 9.700z" fill="#c8281e" stroke="#222" stroke-width="0.700"/><path d="M8.800 9l6 3a6.700 6.700 0 0 1-12.400-0.800z" fill="#19a24a" stroke="#222" stroke-width="0.700"/><path d="M8.800 9L2.400 11.200A6.700 6.700 0 0 1 8.800 2.300z" fill="#f2c500" stroke="#222" stroke-width="0.700"/><rect x="10.300" y="16" width="3.400" height="6.600" fill="#f2c500" stroke="#222" stroke-width="0.700"/><rect x="14" y="10" width="3.700" height="12.600" fill="#19a24a" stroke="#222" stroke-width="0.700"/><rect x="18.100" y="17.500" width="3.700" height="5.100" fill="#c8281e" stroke="#222" stroke-width="0.700"/></symbol>
<symbol id="i-labelPin" viewBox="0 0 24 24" overflow="visible"><g opacity="1"><path d="M0.8 9.5l4.2 -5.0h16.2q1 0 1 1v8q0 1-1 1h-16.2z" fill="#eaf2fc" stroke="#4a86d6" stroke-width="1"/><text x="5.6" y="12.1" font-size="6.9" font-weight="bold" font-family="Liberation Sans, sans-serif" fill="#444">ab</text></g><path d="M15.800 7.200c0-1.400 2.400-1.400 2.400 0v7.600h-2.400z" fill="#f4f4f4" stroke="#999" stroke-width="0.600"/><circle cx="18.600" cy="18.600" r="4.800" fill="#a3202a" stroke="#6e1018" stroke-width="0.700"/><circle cx="17.200" cy="17" r="1.600" fill="#d46a70" opacity="0.700"/></symbol>
<symbol id="i-labelRed" viewBox="0 0 24 24" overflow="visible"><g opacity="1"><path d="M1.2 9.5l4.2 -5.0h16.400000000000002q1 0 1 1v8q0 1-1 1h-16.400000000000002z" fill="#fdecec" stroke="#e8202a" stroke-width="1"/><text x="6.0" y="12.1" font-size="6.9" font-weight="bold" font-family="Liberation Sans, sans-serif" fill="#e8202a">abc</text></g></symbol>
<symbol id="i-lblD1" viewBox="0 0 24 24" overflow="visible"><g opacity="0.800"><g opacity="1"><path d="M1.2 9.1l4.032 -4.8h15.968q1 0 1 1v7.6q0 1-1 1h-15.968z" fill="#e4e2d8" stroke="#b3b0a2" stroke-width="1"/><text x="5.832" y="11.7" font-size="6.9" font-weight="bold" font-family="Liberation Sans, sans-serif" fill="#999">ab</text></g><path d="M15.800 7c0-1.400 2.400-1.400 2.400 0v7.600h-2.400z" fill="#f4f4f4" stroke="#aaa" stroke-width="0.600"/><circle cx="18.400" cy="18.400" r="4.800" fill="#c9bfc0" stroke="#b0a6a8" stroke-width="0.700"/></g></symbol>
<symbol id="i-lblD2" viewBox="0 0 24 24" overflow="visible"><g opacity="0.800"><g opacity="1"><path d="M1.2 9.1l4.032 -4.8h15.968q1 0 1 1v7.6q0 1-1 1h-15.968z" fill="#e4e2d8" stroke="#b3b0a2" stroke-width="1"/><text x="5.832" y="11.7" font-size="6.9" font-weight="bold" font-family="Liberation Sans, sans-serif" fill="#999">abc</text></g><path d="M8.800 18.600c2.600-3.800 9.400-3.800 12.400 0-3 3.800-9.800 3.800-12.400 0z" fill="#fafafa" stroke="#999" stroke-width="0.800"/><circle cx="15" cy="18.600" r="2.200" fill="#888"/></g></symbol>
<symbol id="i-lblD3" viewBox="0 0 24 24" overflow="visible"><g opacity="0.800"><g opacity="1"><path d="M1.2 9.1l4.032 -4.8h15.968q1 0 1 1v7.6q0 1-1 1h-15.968z" fill="#e4e2d8" stroke="#b3b0a2" stroke-width="1"/><text x="5.832" y="11.7" font-size="6.9" font-weight="bold" font-family="Liberation Sans, sans-serif" fill="#999">abc</text></g><rect x="13" y="13" width="10.600" height="10.600" rx="1.800" fill="#b5b5b5"/><path d="M15 18.300h4.400v-2.600l3.400 3.200-3.400 3.200v-2.600H15z" fill="#fff"/></g></symbol>
<symbol id="i-lblD4" viewBox="0 0 24 24" overflow="visible"><g opacity="0.800"><g opacity="1"><path d="M1.2 9.1l4.032 -4.8h15.968q1 0 1 1v7.6q0 1-1 1h-15.968z" fill="#e4e2d8" stroke="#b3b0a2" stroke-width="1"/><text x="5.832" y="11.7" font-size="6.9" font-weight="bold" font-family="Liberation Sans, sans-serif" fill="#999">abc</text></g><rect x="13" y="13" width="10.600" height="10.600" rx="1.800" fill="#b5b5b5"/><path d="M21.400 18.400a3.100 3.100 0 1 1-3.100-3.100" fill="none" stroke="#fff" stroke-width="1.600"/><path d="M17.400 13.800l2.400 1.600-2.400 1.800z" fill="#fff"/></g></symbol>
<symbol id="i-lblD5" viewBox="0 0 24 24" overflow="visible"><g opacity="0.800"><g opacity="1"><path d="M1.2 9.1l4.032 -4.8h15.968q1 0 1 1v7.6q0 1-1 1h-15.968z" fill="#e4e2d8" stroke="#b3b0a2" stroke-width="1"/><text x="5.832" y="11.7" font-size="6.9" font-weight="bold" font-family="Liberation Sans, sans-serif" fill="#999">abc</text></g><rect x="13" y="13" width="10.600" height="10.600" rx="1.800" fill="#c4c2b8"/><path d="M15 21.800l1-2.800 4.600-4.600 1.800 1.800-4.600 4.600z" fill="#fff"/></g></symbol>
<symbol id="i-grass" viewBox="0 0 24 24" overflow="visible"><path d="M12.600 0.800L23 19H1.400z" fill="#6aa22a"/><path d="M11.400 8.200l4.200 7.900H6.600z" fill="#f6f6f6"/><path d="M12.600 0.800L23 19l-5.600-1.400L10.400 5z" fill="#8cc23c" opacity="0.550"/><path d="M3.800 16.400h17.800L23 19H1.400z" fill="#4c8a1e"/><path d="M0.800 21.200h22.600" stroke="#f08a1c" stroke-width="1.700"/><path d="M1.400 19.600h21.400" stroke="#fbd5a0" stroke-width="0.800"/></symbol>
<symbol id="i-metasearch" viewBox="0 0 24 24" overflow="visible"><circle cx="12" cy="11.300" r="11" fill="#4f7fbf" stroke="#16305c" stroke-width="1"/><path d="M1 11.300h22M12 0.300v22M12 0.300c-5.600 3.600-5.600 18.400 0 22M12 0.300c5.600 3.600 5.600 18.400 0 22M3 5c4.600 2.600 13.400 2.600 18 0M3 17.600c4.600-2.600 13.400-2.600 18 0" fill="none" stroke="#dbe7f6" stroke-width="0.900"/><path d="M4 7.500c2-1.500 4-0.500 4.600 1s-1.600 3-3 2.600-2.600-2.800-1.600-3.600zM13 4.500c2-1 5-0.500 5.600 1s-1.600 2.600-3.600 2.600-3-2.800-2-3.600z" fill="#e8eff8" opacity="0.750"/><path d="M9.400 12.800h5.200l1.200 1.800 3.800 5.400c1 2.200-0.600 4-2.800 4s-3.800-1.400-3.800-3.200h-2c0 1.800-1.600 3.200-3.800 3.200s-3.800-1.800-2.800-4l3.800-5.400z" fill="#0c0c0c"/><ellipse cx="7" cy="21.400" rx="2.400" ry="1.300" fill="#fff"/><ellipse cx="17" cy="21.400" rx="2.400" ry="1.300" fill="#fff"/></symbol>
<symbol id="i-python" viewBox="0 0 24 24" overflow="visible"><path d="M11.600 1.400c-4.800 0-4.600 2.200-4.600 2.200v3h4.800v0.800H4.600S1.400 7 1.400 12s2.800 4.800 2.800 4.800h1.800v-2.600s-0.200-2.800 2.800-2.800h4.800s2.600 0 2.600-2.600V4.200s0.400-2.800-4.600-2.800z" fill="#3a76ad"/><circle cx="9" cy="3.800" r="0.900" fill="#fff"/><path d="M12 22.200c4.800 0 4.600-2.200 4.600-2.200v-3h-4.800v-0.800H19s3.200 0.400 3.200-4.600-2.800-4.800-2.800-4.800h-1.800v2.600s0.200 2.800-2.800 2.800H10s-2.600 0-2.600 2.600v4.600s-0.400 2.800 4.600 2.800z" fill="#f7cf44"/><circle cx="14.600" cy="19.800" r="0.900" fill="#fff"/><path d="M15.600 17.800l6.600 2.400-6.600 2.400" fill="none" stroke="#333" stroke-width="1.100"/></symbol>
<symbol id="i-help" viewBox="0 0 24 24" overflow="visible"><rect x="2.200" y="1.200" width="19.600" height="21.200" rx="1" fill="#5f8fca" stroke="#1f2e44" stroke-width="1.100"/><rect x="2.200" y="1.200" width="5.200" height="21.200" fill="#2c3e58" stroke="#1f2e44" stroke-width="1.100"/><text x="10.600" y="17" font-size="14.500" font-family="Liberation Serif, serif" fill="#fff">?</text></symbol>
<symbol id="i-r1" viewBox="0 0 24 24" overflow="visible"><g opacity="0.600"><path d="M1.400 22.500C2 12 2.600 2.500 4.400 2.500c1.600 0 1.800 4.500 2.400 4.500s0.800-5 2.400-5c2.200 0 2.200 10 4.400 15 1.800 3.600 4.800 4.800 9 5.500z" fill="#d3dbcc" stroke="#a9b2a3" stroke-width="0.800"/><path d="M9.400 2.300c2 0.600 2 9.800 4.200 14.700 1 2 2.400 3.200 4.200 4v1.300H9.400z" fill="#f4f4f2" opacity="0.850"/><path d="M2.300 22.400c0.300-6 0.800-10.400 1.400-13.600M6.900 7.300v15" stroke="#dba5a5" stroke-width="1"/><path d="M0.800 22.600h22.400" stroke="#b5b5b5" stroke-width="0.800"/></g></symbol>
<symbol id="i-r2" viewBox="0 0 24 24" overflow="visible"><g opacity="0.600"><path d="M1.400 22.500C2 12 2.600 2.500 4.400 2.500c1.600 0 1.800 4.500 2.400 4.500s0.800-5 2.400-5c2.200 0 2.200 10 4.400 15 1.800 3.600 4.800 4.800 9 5.500z" fill="#d3dbcc" stroke="#a9b2a3" stroke-width="0.800"/><path d="M9.400 2.300c2 0.600 2 9.800 4.200 14.700 1 2 2.400 3.200 4.200 4v1.300H9.400z" fill="#f4f4f2" opacity="0.850"/><path d="M2.300 22.400c0.300-6 0.800-10.400 1.400-13.600M6.900 7.300v15" stroke="#dba5a5" stroke-width="1"/><path d="M0.800 22.600h22.400" stroke="#b5b5b5" stroke-width="0.800"/><path d="M0.800 11.600l4.600-4v2.400h11.800V7l5.600 4.600-5.600 4.600v-3H5.400v2.400z" fill="#f4f4f4" stroke="#999" stroke-width="0.900"/></g></symbol>
<symbol id="i-r3" viewBox="0 0 24 24" overflow="visible"><g opacity="0.750"><g stroke="#d9d2b0" stroke-width="1.400"><path d="M10 0.600v3M1 10h3M3.200 3.200l2.200 2.200M16.800 3.200l-2.200 2.200M3.200 16.800l2.200-2.200"/></g><circle cx="10" cy="10.200" r="6" fill="#d6d3bd"/><rect x="12.6" y="12.6" width="11" height="11" rx="1.600" fill="#bfbfb8" stroke="#adada6" stroke-width="0.600"/><path d="M14.8 21.2h6.600l-3.300-6.200z" fill="#fff"/></g></symbol>
<symbol id="i-r4" viewBox="0 0 24 24" overflow="visible"><g opacity="0.750"><g stroke="#d9d2b0" stroke-width="1.400"><path d="M10 0.600v3M1 10h3M3.200 3.200l2.200 2.200M16.800 3.200l-2.200 2.200M3.200 16.800l2.200-2.200"/></g><circle cx="10" cy="10.200" r="6" fill="#d6d3bd"/><rect x="12.6" y="12.6" width="11" height="11" rx="1.600" fill="#bfbfb8" stroke="#adada6" stroke-width="0.600"/><path d="M14.8 15.2h6.600l-3.300 6.200z" fill="#fff"/></g></symbol>
<symbol id="i-r5" viewBox="0 0 24 24" overflow="visible"><g opacity="0.750"><circle cx="9.600" cy="9.600" r="8.400" fill="#fff" stroke="#aaa" stroke-width="1"/><path d="M3.600 15.400A8.200 8.200 0 0 1 15.400 3.600z" fill="#c9c9c9"/><rect x="12.6" y="12.6" width="11" height="11" rx="1.600" fill="#bfbfb8" stroke="#adada6" stroke-width="0.600"/><path d="M14.8 21.2h6.600l-3.300-6.200z" fill="#fff"/></g></symbol>
<symbol id="i-r6" viewBox="0 0 24 24" overflow="visible"><g opacity="0.750"><circle cx="9.600" cy="9.600" r="8.400" fill="#fff" stroke="#aaa" stroke-width="1"/><path d="M3.600 15.400A8.200 8.200 0 0 1 15.400 3.600z" fill="#c9c9c9"/><rect x="12.6" y="12.6" width="11" height="11" rx="1.600" fill="#bfbfb8" stroke="#adada6" stroke-width="0.600"/><path d="M14.8 15.2h6.600l-3.300 6.200z" fill="#fff"/></g></symbol>
<symbol id="i-r7" viewBox="0 0 24 24" overflow="visible"><g opacity="0.800"><path d="M2 4.400c1.400-2.600 3.800-2.200 4.800 0.600L9.400 14.600M15.600 1.400L9.400 14.600c-0.800 2.600-1.200 6.600-0.200 6.800s1.200-3.400 0.200-6.800" fill="none" stroke="#a9a9a9" stroke-width="1.300" stroke-linecap="round"/><rect x="12.6" y="12.6" width="11" height="11" rx="1.600" fill="#bfbfb8" stroke="#adada6" stroke-width="0.600"/><path d="M14.8 21.2h6.600l-3.300-6.200z" fill="#fff"/></g></symbol>
<symbol id="i-r8" viewBox="0 0 24 24" overflow="visible"><g opacity="0.800"><path d="M2 4.400c1.400-2.600 3.800-2.200 4.800 0.600L9.400 14.600M15.600 1.400L9.400 14.600c-0.800 2.600-1.200 6.600-0.200 6.800s1.200-3.400 0.200-6.800" fill="none" stroke="#a9a9a9" stroke-width="1.300" stroke-linecap="round"/><rect x="12.6" y="12.6" width="11" height="11" rx="1.600" fill="#bfbfb8" stroke="#adada6" stroke-width="0.600"/><path d="M14.8 15.2h6.600l-3.300 6.200z" fill="#fff"/></g></symbol>
<symbol id="i-magnet" viewBox="0 0 24 24" overflow="visible"><g transform="translate(1.500 1.200) rotate(-45 12 12)"><path d="M4 5.500h3.800v6.500a4.200 4.200 0 0 0 8.400 0V5.500H20v6.500a8 8 0 0 1-16 0z" fill="#d40000" stroke="#a00000" stroke-width="0.600"/><path d="M4.300 5.800h3.200v2.900H4.300zM16.500 5.800h3.200v2.900h-3.200z" fill="#f4f4f4" stroke="#c00000" stroke-width="0.700" stroke-dasharray="1 0.700"/></g></symbol>
<symbol id="i-tracing" viewBox="0 0 24 24" overflow="visible"><g opacity="0.400"><path d="M3.600 2.600l7 11.600M17 2.800l-6.400 11.400v6M10.600 14.200l8-3.600M15 6.600l5.200 0" fill="none" stroke="#8aa58a" stroke-width="1.300"/><g fill="#fff" stroke="#888" stroke-width="0.800"><circle cx="3.600" cy="2.600" r="1.500"/><circle cx="17" cy="2.800" r="1.500"/><circle cx="10.600" cy="14.200" r="1.500"/><circle cx="10.600" cy="20.400" r="1.500"/><circle cx="18.600" cy="10.600" r="1.500"/><circle cx="20.400" cy="6.600" r="1.500"/><circle cx="7" cy="8.200" r="1.500"/></g></g></symbol>
<symbol id="i-snapMode" viewBox="0 0 24 24" overflow="visible"><g fill="#e8e8e8" stroke="#b0b0b0" stroke-width="0.800"><rect x="4.200" y="3.600" width="3.200" height="3.200"/><rect x="16.400" y="6" width="3.200" height="3.200"/><rect x="10.200" y="15.800" width="3.200" height="3.200"/></g></symbol>
<symbol id="i-topo" viewBox="0 0 24 24" overflow="visible"><path d="M5.600 1.600l3 10.400 0 10.400M8.600 12L22.400 6.600" fill="none" stroke="#5cae5c" stroke-width="1.700" stroke-linecap="round"/><rect x="6.400" y="9.800" width="4.400" height="4.400" fill="#b9b9b9" stroke="#666" stroke-width="1"/></symbol>
<symbol id="i-overlap" viewBox="0 0 24 24" overflow="visible"><path d="M9 2.600c4-1.400 12.400-0.600 13.600 2.400 1 2.600-1.600 6.200-5.400 8.400l-4.600-2.400z" fill="#a3a3a3" stroke="#5c5c5c" stroke-width="1"/><path d="M2 6c0.600-3.200 4.600-4.800 8-3.400 3.200 1.400 3 4.400 3.800 7.200 0.800 2.400 3.400 3.600 3.400 7 0 3.200-2.600 5.400-5.600 5.200-3.600-0.400-4.600-3.400-5.200-6.400C5.800 12.400 1.400 10 2 6z" fill="#78b86c" stroke="#2e5a2a" stroke-width="1.100"/><circle cx="8" cy="10.400" r="0.700" fill="#2e5a2a"/><circle cx="11" cy="10.400" r="0.700" fill="#2e5a2a"/></symbol>
<symbol id="i-snapX" viewBox="0 0 24 24" overflow="visible"><g opacity="0.450"><path d="M1.600 1.600l20.800 20.800M22.400 1.600L1.600 22.400" stroke="#c2c8c2" stroke-width="1.600"/><rect x="10" y="10" width="4" height="4" fill="#eee" stroke="#bbb" stroke-width="0.800"/></g></symbol>
<symbol id="i-selfSnap" viewBox="0 0 24 24" overflow="visible"><g opacity="0.450"><path d="M1.600 22.400L11 12.800 22.400 1.600M3.600 6.400l7.400 6.400 8 6.400" stroke="#c9c6b8" stroke-width="1.600" fill="none"/><path d="M7.200 9.600l6-3.600 2 5.600 3.600 4.400-6 1.600z" fill="#d5d2c4"/></g></symbol>
<symbol id="i-advDigit" viewBox="0 0 24 24" overflow="visible"><g opacity="0.400"><path d="M3.200 5.200l7.200 2.400-4 11.600" fill="none" stroke="#999" stroke-width="1.200"/><g fill="#fff" stroke="#999" stroke-width="0.800"><circle cx="3.200" cy="5.200" r="1.700"/><circle cx="10.400" cy="7.600" r="1.700"/><circle cx="6.400" cy="19.200" r="1.700"/></g><path d="M10.400 2.600l3.200-1.600 9.600 13.200-1.200 3.600-3.200-1.600z" fill="#d5d2c4" stroke="#aaa" stroke-width="0.700"/></g></symbol>
<symbol id="i-dg1" viewBox="0 0 24 24" overflow="visible"><g opacity="0.5"><path d="M2.600 19.600C2.600 8 8 3.600 18 2.800" fill="none" stroke="#aaa" stroke-width="1.100"/><g fill="#f4f4f4" stroke="#999" stroke-width="0.900"><rect x="1" y="18" width="3.400" height="3.400"/><rect x="3.600" y="6.400" width="3.400" height="3.400"/><rect x="16.400" y="1.200" width="3.400" height="3.400"/></g></g><rect x="12.5" y="12.7" width="11" height="10.8" rx="2" fill="#cbc8bc"/><path d="M18.00 18.10L22.70 18.10M18.00 18.10L20.69 20.79M18.00 18.10L18.00 22.80M18.00 18.10L15.31 20.79M18.00 18.10L13.30 18.10M18.00 18.10L15.31 15.41M18.00 18.10L18.00 13.40M18.00 18.10L20.69 15.41" stroke="#f4f3ef" stroke-width="1.3"/><circle cx="18.0" cy="18.1" r="2.2" fill="#f4f3ef"/><circle cx="18.0" cy="18.1" r="0.75" fill="#cbc8bc"/></symbol>
<symbol id="i-dg2" viewBox="0 0 24 24" overflow="visible"><g opacity="0.5"><circle cx="10.600" cy="9.600" r="8" fill="none" stroke="#b5b5b5" stroke-width="3"/><g fill="#f4f4f4" stroke="#999" stroke-width="0.900"><rect x="14.600" y="1.600" width="3.400" height="3.400"/><rect x="4.400" y="14.600" width="3.400" height="3.400"/></g></g><rect x="12.5" y="12.7" width="11" height="10.8" rx="2" fill="#cbc8bc"/><path d="M18.00 18.10L22.70 18.10M18.00 18.10L20.69 20.79M18.00 18.10L18.00 22.80M18.00 18.10L15.31 20.79M18.00 18.10L13.30 18.10M18.00 18.10L15.31 15.41M18.00 18.10L18.00 13.40M18.00 18.10L20.69 15.41" stroke="#f4f3ef" stroke-width="1.3"/><circle cx="18.0" cy="18.1" r="2.2" fill="#f4f3ef"/><circle cx="18.0" cy="18.1" r="0.75" fill="#cbc8bc"/></symbol>
<symbol id="i-dg3" viewBox="0 0 24 24" overflow="visible"><g opacity="0.5"><ellipse cx="11" cy="9.600" rx="9.600" ry="6" transform="rotate(-24 11 9.600)" fill="none" stroke="#aaa" stroke-width="1.800"/><ellipse cx="11" cy="8.600" rx="4.600" ry="2.800" transform="rotate(-24 11 8.600)" fill="none" stroke="#bbb" stroke-width="1"/><g fill="#f4f4f4" stroke="#999" stroke-width="0.900"><rect x="9.600" y="8.400" width="3.400" height="3.400"/><rect x="1" y="11.600" width="3.400" height="3.400"/></g></g><rect x="12.5" y="12.7" width="11" height="10.8" rx="2" fill="#cbc8bc"/><path d="M18.00 18.10L22.70 18.10M18.00 18.10L20.69 20.79M18.00 18.10L18.00 22.80M18.00 18.10L15.31 20.79M18.00 18.10L13.30 18.10M18.00 18.10L15.31 15.41M18.00 18.10L18.00 13.40M18.00 18.10L20.69 15.41" stroke="#f4f3ef" stroke-width="1.3"/><circle cx="18.0" cy="18.1" r="2.2" fill="#f4f3ef"/><circle cx="18.0" cy="18.1" r="0.75" fill="#cbc8bc"/></symbol>
<symbol id="i-dg4" viewBox="0 0 24 24" overflow="visible"><g opacity="0.5"><rect x="2" y="3.800" width="17.200" height="12.600" fill="none" stroke="#b5b5b5" stroke-width="2.800"/><g fill="#f4f4f4" stroke="#999" stroke-width="0.900"><rect x="17.200" y="1.600" width="3.400" height="3.400"/><rect x="8.600" y="8" width="3.400" height="3.400"/></g></g><rect x="12.5" y="12.7" width="11" height="10.8" rx="2" fill="#cbc8bc"/><path d="M18.00 18.10L22.70 18.10M18.00 18.10L20.69 20.79M18.00 18.10L18.00 22.80M18.00 18.10L15.31 20.79M18.00 18.10L13.30 18.10M18.00 18.10L15.31 15.41M18.00 18.10L18.00 13.40M18.00 18.10L20.69 15.41" stroke="#f4f3ef" stroke-width="1.3"/><circle cx="18.0" cy="18.1" r="2.2" fill="#f4f3ef"/><circle cx="18.0" cy="18.1" r="0.75" fill="#cbc8bc"/></symbol>
<symbol id="i-dg5" viewBox="0 0 24 24" overflow="visible"><g opacity="0.5"><path d="M1.800 10.400l5-7.600h8.800l3.600 8-6.400 7.600-8-1.600z" fill="none" stroke="#b5b5b5" stroke-width="2.800"/><g fill="#f4f4f4" stroke="#999" stroke-width="0.900"><rect x="5" y="1.200" width="3.400" height="3.400"/><rect x="16.600" y="8.400" width="3.400" height="3.400"/></g></g><rect x="12.5" y="12.7" width="11" height="10.8" rx="2" fill="#cbc8bc"/><path d="M18.00 18.10L22.70 18.10M18.00 18.10L20.69 20.79M18.00 18.10L18.00 22.80M18.00 18.10L15.31 20.79M18.00 18.10L13.30 18.10M18.00 18.10L15.31 15.41M18.00 18.10L18.00 13.40M18.00 18.10L20.69 15.41" stroke="#f4f3ef" stroke-width="1.3"/><circle cx="18.0" cy="18.1" r="2.2" fill="#f4f3ef"/><circle cx="18.0" cy="18.1" r="0.75" fill="#cbc8bc"/></symbol>
<symbol id="i-copyFeat" viewBox="0 0 24 24" overflow="visible"><path d="M1.6 1.6h7l4 4v10h-11z" fill="#fff" stroke="#666" stroke-width="0.900" stroke-linejoin="round"/><path d="M8.6 1.6v4h4" fill="#eee" stroke="#666" stroke-width="0.800"/><circle cx="7" cy="10.600" r="1.700" fill="#f08a8a"/><path d="M10.4 7.4h7.6l4 4v11h-11.6z" fill="#fff" stroke="#666" stroke-width="0.900" stroke-linejoin="round"/><path d="M18.0 7.4v4h4" fill="#eee" stroke="#666" stroke-width="0.800"/><circle cx="16.200" cy="16.600" r="2" fill="#e8141c"/></symbol>
<symbol id="i-pinMap" viewBox="0 0 24 24" overflow="visible"><path d="M0.800 1.400l3.600-0.800 4 0.600 4.400-0.800 5.200 0.800 5.800-0.800 0.400 5.600-0.600 4.800 0.600 5.200-0.400 7-5.800-0.600-4.400 0.800-4.800-0.800-3.600 0.600-4.400-0.600 0.400-6L0.600 11l0.600-4.600z" fill="#9edc8c"/><path d="M2 6.600l5.600-3.200 3.200 3.600-4.400 4.400zM14.800 16.400l5.600-2.400 2 6.400-5.600 1.600zM3.600 16l4.400-1.200 1.600 5.200-4.800 1.600z" fill="#b7e6a8"/><path d="M22.400 1.200c-2.400 2-1 4.400-2.400 6.600-1 1.600-3 1.600-3.400 3.800" fill="none" stroke="#a8d4ec" stroke-width="1.200"/><path d="M10.200 15.600l-1.500 4.200" stroke="#444" stroke-width="1.300" stroke-linecap="round"/><path d="M9.800 4.400c0.400-1.800 3-2.600 5.200-2 2.200 0.600 3.600 2.200 3.200 3.800-0.200 1-1.200 1.600-2.400 1.800l-0.600 3c1.800 0.800 3 2.200 2.600 3.600-0.400 1.800-3.600 2.400-7 1.400s-5.800-3-5.400-4.800c0.400-1.400 2.200-2 4.400-1.800l1-3c-0.800-0.600-1.200-1.200-1-2z" fill="#e8141c" stroke="#a30c12" stroke-width="0.700"/><path d="M10.800 4.200c0.800-1 2.800-1.400 4.600-0.800" fill="none" stroke="#f7868a" stroke-width="1"/><path d="M6.400 11.400c1.200 1.800 5.600 3.200 8.800 2.600" fill="none" stroke="#b10e14" stroke-width="0.700"/></symbol>
<symbol id="i-zoomDot" viewBox="0 0 24 24" overflow="visible"><g opacity="1"><path d="M8.73 15.17L1 22.6" stroke="#3a3420" stroke-width="3.1"/><path d="M6.57 17.25L1.35 22.25" stroke="#fbd23a" stroke-width="2"/><circle cx="8.53" cy="15.37" r="1.75" fill="#111"/><circle cx="14.6" cy="9.3" r="7.8" fill="#efefef" fill-opacity="0.96" stroke="#858585" stroke-width="1.35"/><path d="M8.4 8.100000000000001a6.199999999999999 6.199999999999999 0 0 1 12.399999999999999 0a11.8 11.8 0 0 0 -12.399999999999999 0" fill="#fff" opacity="0.8"/></g><circle cx="14.800" cy="9.300" r="1.900" fill="#f01018"/></symbol>
<symbol id="i-zoomDots" viewBox="0 0 24 24" overflow="visible"><g opacity="1"><path d="M8.73 15.17L1 22.6" stroke="#3a3420" stroke-width="3.1"/><path d="M6.57 17.25L1.35 22.25" stroke="#fbd23a" stroke-width="2"/><circle cx="8.53" cy="15.37" r="1.75" fill="#111"/><circle cx="14.6" cy="9.3" r="7.8" fill="#efefef" fill-opacity="0.96" stroke="#858585" stroke-width="1.35"/><path d="M8.4 8.100000000000001a6.199999999999999 6.199999999999999 0 0 1 12.399999999999999 0a11.8 11.8 0 0 0 -12.399999999999999 0" fill="#fff" opacity="0.8"/></g><circle cx="14.700" cy="9.300" r="1.900" fill="#f01018"/><circle cx="3.300" cy="4.200" r="1.800" fill="#f01018"/><circle cx="20.800" cy="19.500" r="1.800" fill="#f01018"/><circle cx="13.400" cy="20.700" r="1.800" fill="#f01018"/></symbol>
<symbol id="i-selLoc" viewBox="0 0 24 24" overflow="visible"><rect x="3" y="3" width="18" height="18" fill="#b8e0a4" stroke="#444" stroke-width="1.400"/><path d="M3.600 7.600l6.400 2.400 3.200 6 6.400 3.200M12 3.600l2.400 5.600 5.600 2" stroke="#e0f4d6" stroke-width="1" fill="none" stroke-dasharray="1 1"/><circle cx="12" cy="12.400" r="2.300" fill="#e8141c"/><g fill="#fff" stroke="#555" stroke-width="1"><rect x="0.800" y="0.800" width="4.400" height="4.400" rx="1"/><rect x="18.800" y="0.800" width="4.400" height="4.400" rx="1"/><rect x="0.800" y="18.800" width="4.400" height="4.400" rx="1"/><rect x="18.800" y="18.800" width="4.400" height="4.400" rx="1"/></g></symbol>
<symbol id="i-globeHat" viewBox="0 0 24 24" overflow="visible"><path d="M9 1.700h7l8.200 9.500q-12.200 3.400-24.100 0z" fill="#f2f2f2" stroke="#555" stroke-width="1.200" stroke-linejoin="round"/><path d="M3.500 12.500a8.700 9 0 0 0 17.200 0" fill="#f2f2f2" stroke="#555" stroke-width="1.200"/><path d="M12.100 1.700v19.800M9.600 1.700L5 12.200M14.600 1.700l4.600 10.500M6.400 4.800h11.400M3.600 8h17M5 12.500c0.600 4 2.400 7.400 4.600 8.600M19.200 12.500c-0.600 4-2.400 7.400-4.600 8.600M4.400 15.600h15.400M6.800 18.800h10.600" fill="none" stroke="#555" stroke-width="1"/></symbol>
<symbol id="i-xy" viewBox="0 0 24 24" overflow="visible"><g opacity="0.7"><text x="1.200" y="10" font-size="10.500" font-weight="bold" font-family="Liberation Sans, sans-serif" fill="#bdbdbd">X,Y</text><circle cx="5.600" cy="17.600" r="2.200" fill="#c9c9c9" stroke="#aaa" stroke-width="0.600"/></g><rect x="12.6" y="12.6" width="11" height="10.8" rx="2" fill="#cbc8bc"/><path d="M18.10 18.00L22.80 18.00M18.10 18.00L20.79 20.69M18.10 18.00L18.10 22.70M18.10 18.00L15.41 20.69M18.10 18.00L13.40 18.00M18.10 18.00L15.41 15.31M18.10 18.00L18.10 13.30M18.10 18.00L20.79 15.31" stroke="#f4f3ef" stroke-width="1.3"/><circle cx="18.1" cy="18.0" r="2.2" fill="#f4f3ef"/><circle cx="18.1" cy="18.0" r="0.75" fill="#cbc8bc"/></symbol>
<symbol id="i-wrench" viewBox="0 0 24 24" overflow="visible"><path d="M10.200 10.400l10.800 9.800" stroke="#5c5230" stroke-width="5.600" stroke-linecap="round"/><path d="M10.400 10.600l10.400 9.400" stroke="#ead27c" stroke-width="3.900" stroke-linecap="round"/><path d="M19.600 18.400l1.800 1.600" stroke="#fbf1c8" stroke-width="2.200" stroke-linecap="round"/><path d="M1.600 6.600a5.600 5.600 0 0 1 6.800-5.200L5.400 4.200l0.600 3.200 3 1 3.400-3a5.600 5.600 0 0 1-6.200 7.200c-2.400-0.600-4.200-2.600-4.600-6z" fill="#dedede" stroke="#5a5a5a" stroke-width="1"/></symbol>
<symbol id="i-select" viewBox="0 0 24 24" overflow="visible"><rect x="1.400" y="1.600" width="21" height="18.600" fill="#e1e1e1" stroke="#333" stroke-width="1.100" stroke-dasharray="2 1.400"/><rect x="2.400" y="2.600" width="13" height="12.600" fill="#fce94f" stroke="#c4a000" stroke-width="0.900"/><path transform="translate(10.3 8.7) scale(1.12)" d="M0 0l0.400 13.200 3.200-3 2.400 5 2.400-1.200-2.400-4.800 4.400-0.400z" fill="#fff" stroke="#222" stroke-width="1.100" stroke-linejoin="round"/></symbol>
<symbol id="i-selValue" viewBox="0 0 24 24" overflow="visible"><g fill="#fce94f" stroke="#c4a000" stroke-width="1.100"><rect x="2" y="2.400" width="20" height="5"/><rect x="2" y="9.600" width="20" height="5"/><rect x="2" y="16.800" width="20" height="5"/></g></symbol>
<symbol id="i-deselect" viewBox="0 0 24 24" overflow="visible"><rect x="1.600" y="2" width="13.400" height="12.400" fill="#fce94f" stroke="#c4a000" stroke-width="1"/><rect x="5.600" y="6" width="13.400" height="12.400" fill="#fce94f" stroke="#c4a000" stroke-width="1"/><rect x="12.600" y="12.800" width="10.800" height="10.800" rx="2.400" fill="#d4141c"/><circle cx="18" cy="18.200" r="3.400" fill="none" stroke="#fff" stroke-width="1.500"/><path d="M15.600 20.600l4.800-4.800" stroke="#fff" stroke-width="1.500"/></symbol>
<symbol id="i-editForm" viewBox="0 0 24 24" overflow="visible"><g opacity="0.5"><rect x="1.600" y="2.400" width="20.400" height="10" fill="#f2f2f2" stroke="#aaa" stroke-width="1"/><path d="M1.600 2.400l11 10M12.600 2.400l-11 10M12.600 2.400v10" stroke="#aaa" stroke-width="0.900" fill="none"/><path d="M1.600 12.400v10.200h12M1.600 16h12M1.600 19.400h12M7.600 12.400v10.200" stroke="#aaa" stroke-width="1" fill="none"/><path d="M9 22.800l1.200-4.400L19.600 1.800l3.200 2-9.400 16.600z" fill="#e4e0d8" stroke="#999" stroke-width="0.800"/></g></symbol>
<symbol id="i-selTable" viewBox="0 0 24 24" overflow="visible"><g opacity="0.5"><rect x="1" y="1" width="21.600" height="11.600" fill="#d5d2c4" stroke="#aaa" stroke-width="1"/><path d="M1 1l11 7 10.600-7M12 1v11.600M1 12.600l7-7M22.600 12.600l-6-6" stroke="#eee" stroke-width="0.900" fill="none"/><path d="M1 12.600v9.800h12M1 16h12M1 19.200h12M6.600 12.600v9.800" stroke="#aaa" stroke-width="1" fill="none"/><path transform="translate(10.6 7.6) scale(1.05)" d="M0 0l0.400 13.200 3.200-3 2.400 5 2.400-1.200-2.400-4.800 4.400-0.400z" fill="#fff" stroke="#888" stroke-width="1.100" stroke-linejoin="round"/></g></symbol>
<symbol id="i-meshEd1" viewBox="0 0 24 24" overflow="visible"><g opacity="0.5"><g fill="#f4f4f4" stroke="#999" stroke-width="1"><rect x="1.600" y="2.400" width="7.600" height="7.600"/><rect x="1.600" y="14" width="7.600" height="7.600"/></g><path d="M1.600 2.400l7.600 7.600M9.200 2.400L1.600 10M1.600 14l7.600 7.600M9.200 14l-7.600 7.600M12.400 6.800l4.800-5.200 4.800 5.200-4.800 3.200zM17.200 1.600v8.400M12.400 6.800h9.600" stroke="#999" stroke-width="0.900" fill="none"/><text x="11.400" y="22.200" font-size="27" font-family="Liberation Serif, serif" fill="#aaa">ε</text></g></symbol>
<symbol id="i-meshEd2" viewBox="0 0 24 24" overflow="visible"><g opacity="0.5"><path d="M2 22.400V1.600h20v20.800zM2 1.600l7.600 15.600L14 1.600l8 0-12.400 15.600 12.400 5.200M9.600 17.200L2 22.400M9.600 17.200L14 1.600" fill="none" stroke="#aaa" stroke-width="1"/><g fill="#fbf6e4" stroke="#aaa" stroke-width="0.800"><circle cx="2" cy="1.600" r="1.600"/><circle cx="14" cy="1.600" r="1.600"/><circle cx="22" cy="1.600" r="1.600"/><circle cx="9.600" cy="17.200" r="1.600"/></g></g></symbol>
<symbol id="i-annot" viewBox="0 0 24 24" overflow="visible"><path d="M1.700 3.400h9.400c3.600 0 2 6 5.200 7.200l5.600 1.900" fill="none" stroke="#3a6fb0" stroke-width="1.100"/><g fill="#3a6fb0"><circle cx="2" cy="3.400" r="1.400"/><circle cx="12.600" cy="3.400" r="1.400"/><circle cx="16.300" cy="10.600" r="1.400"/><circle cx="22" cy="12.500" r="1.400"/></g><path d="M19.400 1.500l1.050 2.200 2.400 0.300-1.800 1.650 0.500 2.400-2.150-1.200-2.150 1.200 0.500-2.400-1.800-1.650 2.400-0.300z" fill="#3a6fb0"/><text x="1.200" y="18.800" font-size="14" font-weight="bold" font-family="Liberation Sans, sans-serif" fill="#4f86c6" stroke="#2a558c" stroke-width="0.700">A</text><rect x="15" y="15" width="9.4" height="8.8" rx="1.6" fill="#c9a60a"/><path d="M19.7 16.2v6.4M16.8 17.75l5.8 3.3M22.599999999999998 17.75l-5.8 3.3" stroke="#fff" stroke-width="1.5"/></symbol>
<symbol id="i-selAnnot" viewBox="0 0 24 24" overflow="visible"><rect x="3.500" y="2.700" width="17.100" height="16.100" fill="none" stroke="#444" stroke-width="0.900" stroke-dasharray="1 2"/><g fill="#fff" stroke="#555" stroke-width="0.800"><rect x="2" y="1.300" width="3" height="3"/><rect x="19" y="1.300" width="3" height="3"/><rect x="2" y="17.300" width="3" height="3"/><rect x="19" y="17.300" width="3" height="3"/></g><path d="M5.900 2.200L8.300 19.800l4.100-3.400 4.200 7 3.800-2.400-4.200-6.600 5-0.200z" fill="#fff" stroke="#111" stroke-width="1.200" stroke-linejoin="round"/></symbol>
<symbol id="i-polyAnnot" viewBox="0 0 24 24" overflow="visible"><path d="M3.800 3.100l15.700-0.200L10.900 20.300 3.300 15.800z" fill="none" stroke="#222" stroke-width="1.300"/><circle cx="3.8" cy="3.1" r="2.6" fill="#1f7cf0"/><circle cx="19.5" cy="2.9" r="2.6" fill="#1f7cf0"/><circle cx="10.9" cy="20.3" r="2.6" fill="#1f7cf0"/><circle cx="3.3" cy="15.8" r="2.6" fill="#1f7cf0"/><rect x="15" y="15" width="9" height="8.8" rx="1.8" fill="#4f8c50"/><path d="M19.5 16.4v6M16.5 19.4h6" stroke="#fff" stroke-width="2"/></symbol>
<symbol id="i-lineAnnot" viewBox="0 0 24 24" overflow="visible"><path d="M19.900 3.800L5.900 2.900 3.100 12l5.700 8.900" fill="none" stroke="#222" stroke-width="1.300"/><circle cx="19.9" cy="3.8" r="2.6" fill="#1f7cf0"/><circle cx="5.9" cy="2.9" r="2.6" fill="#1f7cf0"/><circle cx="3.1" cy="12" r="2.6" fill="#1f7cf0"/><circle cx="8.8" cy="20.9" r="2.6" fill="#1f7cf0"/><rect x="14.5" y="15" width="9" height="8.8" rx="1.8" fill="#4f8c50"/><path d="M19.0 16.4v6M16.0 19.4h6" stroke="#fff" stroke-width="2"/></symbol>
<symbol id="i-starAnnot" viewBox="0 0 24 24" overflow="visible"><path d="M11 2.700l2.900 6.400 7.100 0.900-5.300 4.800 1.500 7L11 18.200l-6.200 3.600 1.500-7L1 10l7.100-0.900z" fill="#fce8a8" stroke="#e8a060" stroke-width="1" stroke-linejoin="round"/><rect x="14" y="15" width="9" height="8.8" rx="1.8" fill="#4f8c50"/><path d="M18.5 16.4v6M15.5 19.4h6" stroke="#fff" stroke-width="2"/></symbol>
<symbol id="i-textAnnot" viewBox="0 0 24 24" overflow="visible"><rect x="2.500" y="17.600" width="2.800" height="2.800" fill="#ddd" stroke="#666" stroke-width="0.800"/><text x="5.700" y="17.400" font-size="16" font-weight="bold" font-family="Liberation Serif, serif" fill="#222">T</text><rect x="14.1" y="15" width="9" height="8.8" rx="1.8" fill="#4f8c50"/><path d="M18.6 16.4v6M15.600000000000001 19.4h6" stroke="#fff" stroke-width="2"/></symbol>
<symbol id="i-textBalloon" viewBox="0 0 24 24" overflow="visible"><path d="M1.200 1.600h21.600v14.400H8.400l-6.400 6 2.800-6H1.200z" fill="#e8eef4" stroke="#555" stroke-width="1"/><text x="6.400" y="13.400" font-size="15.500" font-family="Liberation Serif, serif" fill="#333">T</text></symbol>
<symbol id="i-locator" viewBox="0 0 24 24" overflow="visible"><rect x="0.400" y="0.400" width="23.200" height="23.200" fill="#7cb85a"/><path d="M0.400 0.400h23.200L0.400 16z" fill="#94c973" opacity="0.700"/><rect x="0.400" y="0.400" width="23.200" height="23.200" fill="none" stroke="#5e9a3e" stroke-width="0.800"/><circle cx="14" cy="9.600" r="6.600" fill="none" stroke="#fff" stroke-width="2.200"/><path d="M9.400 14.400l-5.600 5.800" stroke="#fff" stroke-width="3" stroke-linecap="round"/></symbol>
<symbol id="i-mapBrush" viewBox="0 0 24 24" overflow="visible"><rect x="0.800" y="0.800" width="20.400" height="22.400" fill="#f5d33a"/><path d="M0.800 1h3.200v14h-3.200z" fill="#a8285a"/><path d="M4 1.200c2.400 2.400 4.400 0.400 6.400 2.400l-2 3.200H4z" fill="#4a9a3a"/><path d="M12.400 2l3.600 1.600-2 8 4.400 5.600-1.600 6h-4l2-5.600-4.800-6.400z" fill="#4a78d8"/><path d="M0.800 19.200c4.400-2 7.600 3.200 12 1.600l0.400 2.400H0.800z" fill="#4a78d8"/><path d="M5.600 9.600h3.600v6.400H5.600z" fill="#a8285a"/><path d="M17.600 12l3.600 2.400v6l-3.600-2z" fill="#4a78d8" opacity="0.800"/><path d="M22.600 1.200l-9.800 11.200" stroke="#8a3a0e" stroke-width="3" stroke-linecap="round"/><path d="M12.800 12.400c-1.600 0.400-3.600 2-8.400 4 3.600 0.400 7.600 0.400 10.400-2z" fill="#333"/><path d="M14 10.800l1.600 1.400" stroke="#ccc" stroke-width="1.800"/></symbol>
<symbol id="s-b_add" viewBox="0 0 16 16" overflow="visible"><rect x="1.500" y="1.500" width="11" height="11" fill="#eeeeec" stroke="#666" stroke-width="1"/><rect x="9.400" y="9.600" width="5.800" height="5.600" rx="1.400" fill="#5a9a5b"/><circle cx="12.300" cy="12.400" r="1.500" fill="#cfe6cf"/></symbol>
<symbol id="s-b_refresh" viewBox="0 0 16 16" overflow="visible"><path d="M1.400 7.600C1.600 3.600 5 1.400 8 1.400c2 0 3.400 0.800 4.400 1.800l1.800-1.800v5.800H8.400l2-2c-0.600-0.600-1.400-1-2.400-1-1.800 0-3.400 1.400-3.600 3.400z" fill="#4f8ad0" stroke="#2f65a6" stroke-width="0.500"/><path d="M14.600 8.400c-0.200 4-3.600 6.200-6.600 6.200-2 0-3.400-0.800-4.400-1.800l-1.800 1.800V8.800h5.800l-2 2c0.600 0.600 1.400 1 2.400 1 1.800 0 3.400-1.400 3.600-3.400z" fill="#4f8ad0" stroke="#2f65a6" stroke-width="0.500"/></symbol>
<symbol id="s-b_filter" viewBox="0 0 16 16" overflow="visible"><path d="M1 2.600h14L9.800 9v6.200H6.200V9z" fill="#5b8dc8" stroke="#3b6ea8" stroke-width="0.700"/><path d="M1 1.200h14v1.600H1z" fill="#f3d64f" stroke="#c7a321" stroke-width="0.500"/></symbol>
<symbol id="s-b_collapse" viewBox="0 0 16 16" overflow="visible"><path d="M1.600 2.400h3M1.600 2.400v11.400h3M1.600 8h3" fill="none" stroke="#666" stroke-width="0.900"/><rect x="4" y="6.800" width="2.400" height="2.400" fill="#f39a1e"/><rect x="4" y="12.400" width="2.400" height="2.400" fill="#f39a1e"/><path d="M11 1l4.600 5.600h-2.800v8.400H9.200V6.600H6.400z" fill="#5b8dc8" stroke="#2f5f9b" stroke-width="0.700"/></symbol>
<symbol id="s-b_info" viewBox="0 0 16 16" overflow="visible"><circle cx="8" cy="8" r="6.800" fill="#5f8fca" stroke="#3c6ca6" stroke-width="0.700"/><path d="M3 5.400a5.800 5.800 0 0 1 10 0a8 8 0 0 0-10 0" fill="#a9c4e6" opacity="0.800"/><text x="5.800" y="12.200" font-size="11.500" font-style="italic" font-weight="bold" font-family="Liberation Serif, serif" fill="#fff">i</text></symbol>
<symbol id="s-folder" viewBox="0 0 16 16" overflow="visible"><path d="M1.500 3.200h5l1.400 1.600h6.600v8.800h-13z" fill="#f4f4f4" stroke="#8a8a8a" stroke-width="0.900" stroke-linejoin="round"/></symbol>
<symbol id="s-home" viewBox="0 0 16 16" overflow="visible"><path d="M1.500 3.200h5l1.400 1.600h6.600v8.800h-13z" fill="#f4f4f4" stroke="#8a8a8a" stroke-width="0.900" stroke-linejoin="round"/><path d="M4.600 9.400L8 6.200l3.400 3.200M5.600 9v3h4.800V9" fill="none" stroke="#333" stroke-width="0.900"/></symbol>
<symbol id="s-gpkg" viewBox="0 0 16 16" overflow="visible"><g transform="translate(0 0.300) scale(0.660)"><path d="M0.400 7.600L11.800 2.800l11.400 4.800-11.400 5.400z" fill="#b8930a" stroke="#4a3c00" stroke-width="0.900" stroke-linejoin="round"/><circle cx="12.200" cy="6" r="6.800" fill="#5d8cc6" stroke="#24487a" stroke-width="0.900"/><path d="M7.600 2.600c1.800-1.600 3.400-0.400 4.400 0.400s-0.400 2.400-1.800 2.800-1.400 2.600-2.800 2-1.200-3.800 0.200-5.200zM14 6.400c1.200-0.800 3-0.600 3.600 0.400s-0.600 3.200-2 3.400-2.800-3-1.600-3.800z" fill="#e4ecf6" opacity="0.850"/><path d="M0.400 7.600l11.400 5.400v10.200L0.400 15.600z" fill="#d4aa00" stroke="#4a3c00" stroke-width="0.900" stroke-linejoin="round"/><path d="M23.200 7.600l-11.400 5.400v10.200l11.400-7.600z" fill="#fce94f" stroke="#4a3c00" stroke-width="0.900" stroke-linejoin="round"/></g></symbol>
<symbol id="s-spatialite" viewBox="0 0 16 16" overflow="visible"><g transform="translate(0.300 0.300) scale(0.650)"><path d="M22.700 0.500C15 1.500 7.400 6 4 15.300L0.500 23l1.300 0.400 2.800-5.200c2.400 0.300 4.600-0.300 6.800-1.600-0.900 0-1.600-0.100-2.300-0.500 3.300-0.600 6-2.200 8.300-4.600-0.900 0.200-1.700 0.200-2.500 0 3.900-2.300 6.700-6 7.800-11z" fill="#86a5d2" stroke="#34557f" stroke-width="0.900" stroke-linejoin="round"/><path d="M3.800 17C8 10 14 5 21.600 1.600" fill="none" stroke="#dbe6f4" stroke-width="0.900"/></g></symbol>
<symbol id="s-postgis" viewBox="0 0 16 16" overflow="visible"><path d="M1.500 5.500C1.500 2 4 0.800 6.500 1.200 7.500 0.600 9 0.600 10 1.200 12.500 0.600 15 2 14.800 5.500c-0.200 2.500-1.300 4-2.600 4.500l0.600 1.500 1.700 0.300v0.800l-2.500 0.200c-0.500 1.700-1.500 2.800-3 2.800-1.400 0-1.600-1.600-1.600-3.100-1.900 0-5.400-2-5.900-7z" fill="#6a96c8" stroke="#2a4a78" stroke-width="0.900" stroke-linejoin="round"/><path d="M5.600 2.400C4.600 5 5 9 7.200 11.600M10.600 2.400c1 2.600 0.600 5.600-0.300 7.600" fill="none" stroke="#dce6f2" stroke-width="0.800"/><circle cx="6.700" cy="4.800" r="0.550" fill="#fff"/><circle cx="9.800" cy="4.800" r="0.550" fill="#fff"/></symbol>
<symbol id="s-conn" viewBox="0 0 16 16" overflow="visible"><path d="M2.700 8H8.500M12.600 4.700L8.500 8l4.100 3.300" fill="none" stroke="#9c5a00" stroke-width="1.800" stroke-linecap="round" stroke-linejoin="round"/></symbol>
<symbol id="s-schema" viewBox="0 0 16 16" overflow="visible"><path d="M3 4v8c0 1.400 2.200 2.400 5 2.400s5-1 5-2.400V4" fill="#f7f7f7" stroke="#7a7a7a" stroke-width="0.900"/><ellipse cx="8" cy="4" rx="5" ry="2.200" fill="#fdfdfd" stroke="#7a7a7a" stroke-width="0.900"/><path d="M3 8c0 1.400 2.200 2.400 5 2.400s5-1 5-2.400" fill="none" stroke="#7a7a7a" stroke-width="0.900"/></symbol>
<symbol id="s-pts" viewBox="0 0 16 16" overflow="visible"><g fill="#fff" stroke="#999" stroke-width="0.800"><circle cx="11" cy="2.600" r="1.300"/><circle cx="4" cy="6" r="1.300"/><circle cx="2.400" cy="12.600" r="1.300"/></g></symbol>
<symbol id="s-ptsb" viewBox="0 0 16 16" overflow="visible"><g fill="#dfeaf6" stroke="#5b8dc8" stroke-width="0.900"><circle cx="11" cy="2.600" r="1.300"/><circle cx="4" cy="6" r="1.300"/><circle cx="2.400" cy="12.600" r="1.300"/></g></symbol>
<symbol id="s-line" viewBox="0 0 16 16" overflow="visible"><path d="M1.400 2.800l4.200 10.400 4.200-9.800 4.600-1.200" fill="none" stroke="#7a7a7a" stroke-width="0.900"/><g fill="#fff" stroke="#7a7a7a" stroke-width="0.700"><circle cx="1.400" cy="2.800" r="1.100"/><circle cx="5.600" cy="13.200" r="1.100"/><circle cx="9.800" cy="3.400" r="1.100"/><circle cx="14.400" cy="2.200" r="1.100"/></g></symbol>
<symbol id="s-hana" viewBox="0 0 16 16" overflow="visible"><rect x="1" y="1" width="14" height="14" fill="none" stroke="#2f5f9b" stroke-width="1" stroke-dasharray="1.200 1.200"/><rect x="3" y="3" width="10" height="10" fill="#6a96cc"/></symbol>
<symbol id="s-mssql" viewBox="0 0 16 16" overflow="visible"><path d="M1.600 0.600c5 0 10 2.400 13.600 6.400-3.600 4-8.600 7.400-11.600 8.400C5.200 10.400 4.800 5.400 1.600 0.600z" fill="#5a85bd" stroke="#2c4f80" stroke-width="0.700"/><path d="M5 1.800c2.400 4.400 2.800 8.800 1.600 12.400M8 3c2 3.600 2.400 7 1.200 9.800M11 5c1 2 1.200 3.800 0.400 5.600" fill="none" stroke="#c9d9ee" stroke-width="0.700"/></symbol>
<symbol id="s-l_style" viewBox="0 0 16 16" overflow="visible"><path d="M0.800 9.600l6-6 4 3-5.200 7.400z" fill="#e8d9b0" stroke="#8a7a4a" stroke-width="0.500"/><path d="M0.800 9.600l3 1.800 2-3.400-2.200-1.200z" fill="#e23a2e"/><path d="M3.600 6.800l2.200 1.200 2.400-3.200-1.400-1.200z" fill="#f2d43a"/><path d="M1 10l4.600 4 2-2.400-3.800-0.200z" fill="#4a7fc0"/><path d="M7.400 9l7-7.200" stroke="#d9902e" stroke-width="2" stroke-linecap="round"/><path d="M5.400 8.200l3.400 3-1.800 2.400-3.600-3.600z" fill="#caa86a" stroke="#7a6230" stroke-width="0.600"/></symbol>
<symbol id="s-l_group" viewBox="0 0 16 16" overflow="visible"><path d="M1.600 6.400v8.400h8.400M3.800 4.200v8.400h8.400V4.200z" fill="#f4f4f4" stroke="#777" stroke-width="0.900"/><path d="M6.600 9V2.400c0-1.800 2.800-1.800 2.800 0V9M8 3.600V10" fill="none" stroke="#4a6fa0" stroke-width="1"/><circle cx="12.200" cy="12.400" r="3.200" fill="#6aa86a" stroke="#eaf4ea" stroke-width="0.900"/></symbol>
<symbol id="s-l_eye" viewBox="0 0 16 16" overflow="visible"><path d="M0.600 7.400C3 3 11 2.400 14.600 7.400 11 12 3.600 12 0.600 7.400z" fill="#f8f8f8" stroke="#8a8a8a" stroke-width="0.900"/><circle cx="7.400" cy="7" r="3.200" fill="#5a8fd0" stroke="#355f98" stroke-width="0.600"/><circle cx="7.400" cy="7" r="1.400" fill="#1c2c44"/><circle cx="6.400" cy="6" r="0.700" fill="#fff"/><path d="M2 9.600c3.600 3 8.400 2.800 11.600-0.400" fill="none" stroke="#aaa" stroke-width="0.700"/><path d="M10.600 12.800h5l-2.500 3z" fill="#555"/></symbol>
<symbol id="s-l_filter" viewBox="0 0 16 16" overflow="visible"><path d="M1 2.600h13L9.200 8.600v6.600H5.800V8.600z" fill="#5b8dc8" stroke="#3b6ea8" stroke-width="0.700"/><path d="M1 1h13v1.800H1z" fill="#f3d64f" stroke="#c7a321" stroke-width="0.500"/><path d="M10.600 13h5l-2.500 3z" fill="#555"/></symbol>
<symbol id="s-l_expr" viewBox="0 0 16 16" overflow="visible"><text x="0" y="11.400" font-size="16" font-family="Liberation Serif, serif" fill="#6a2a8a">ε</text><path d="M8.400 9.600h7L13 12.400V16h-2.400v-3.600z" fill="#b9b9b9" stroke="#8a8a8a" stroke-width="0.600"/></symbol>
<symbol id="s-l_expand" viewBox="0 0 16 16" overflow="visible"><path d="M1.600 2.400h3M1.600 2.400v11.400h3M1.600 8h3" fill="none" stroke="#666" stroke-width="0.900"/><rect x="4" y="6.800" width="2.400" height="2.400" fill="#f39a1e"/><rect x="4" y="12.400" width="2.400" height="2.400" fill="#f39a1e"/><path d="M11 15.400l4.600-5.600h-2.800V1.400H9.200v8.400H6.400z" fill="#5b8dc8" stroke="#2f5f9b" stroke-width="0.700"/></symbol>
<symbol id="s-l_collapse" viewBox="0 0 16 16" overflow="visible"><path d="M1.600 2.400h3M1.600 2.400v11.400h3M1.600 8h3" fill="none" stroke="#666" stroke-width="0.900"/><rect x="4" y="6.800" width="2.400" height="2.400" fill="#f39a1e"/><rect x="4" y="12.400" width="2.400" height="2.400" fill="#f39a1e"/><path d="M11 1l4.600 5.600h-2.800v8.400H9.200V6.600H6.400z" fill="#5b8dc8" stroke="#2f5f9b" stroke-width="0.700"/></symbol>
<symbol id="s-l_remove" viewBox="0 0 16 16" overflow="visible"><rect x="1" y="1" width="11.600" height="11.600" fill="#fbfbfb" stroke="#777" stroke-width="1"/><rect x="9.400" y="10.600" width="6.200" height="4.400" rx="1.400" fill="#e8303a"/><path d="M10.800 12.800h3.400" stroke="#fff" stroke-width="1.100"/></symbol>
<symbol id="s-r_form" viewBox="0 0 16 16" overflow="visible"><rect x="1" y="1" width="14" height="14" rx="1.600" fill="#e4edf8" stroke="#9db9dc" stroke-width="0.900"/><path d="M3.400 5.400h4M3.400 10.600h4" stroke="#9db9dc" stroke-width="1.500"/><rect x="8.600" y="3.600" width="4.400" height="3.600" rx="0.600" fill="#fff" stroke="#9db9dc" stroke-width="0.800"/><rect x="8.600" y="8.800" width="4.400" height="3.600" rx="0.600" fill="#fff" stroke="#9db9dc" stroke-width="0.800"/></symbol>
<symbol id="s-r_expandnew" viewBox="0 0 16 16" overflow="visible"><path d="M8.600 15.400l4.600-5.600h-2.800V3.400H6.800v6.400H4z" fill="#5b8dc8" stroke="#2f5f9b" stroke-width="0.700"/><path d="M6 0.400l1.400 3 3.200 0.400-2.400 2.200 0.600 3.200L6 7.600 3.200 9.200l0.600-3.200L1.400 3.800l3.200-0.400z" fill="#f7d84a" stroke="#d9a21e" stroke-width="0.700"/><rect x="11" y="6" width="2.400" height="2.400" fill="#f39a1e"/></symbol>
<symbol id="s-r_clear" viewBox="0 0 16 16" overflow="visible"><rect x="1" y="1.400" width="9" height="8.400" fill="#f2dc4a" stroke="#c4a300" stroke-width="0.900"/><rect x="3.800" y="4.200" width="9" height="8.400" fill="#f2dc4a" stroke="#c4a300" stroke-width="0.900"/><rect x="8.600" y="8.800" width="7" height="7" rx="1.600" fill="#d4141c"/><circle cx="12.100" cy="12.300" r="2.200" fill="none" stroke="#fff" stroke-width="1"/><path d="M10.600 13.800l3-3" stroke="#fff" stroke-width="1"/></symbol>
<symbol id="s-r_copy" viewBox="0 0 16 16" overflow="visible"><g opacity="0.450"><path d="M6 1.400h5l3 3v8H6z" fill="#f6f6f6" stroke="#777" stroke-width="0.900"/><path d="M2.400 4.400h5l3 3v8h-8z" fill="#f6f6f6" stroke="#777" stroke-width="0.900"/><path d="M4 9.600h4.600M4 11.600h4.600M4 13.600h4.600" stroke="#888" stroke-width="0.700"/></g></symbol>
<symbol id="s-r_print" viewBox="0 0 16 16" overflow="visible"><g opacity="0.400"><rect x="4" y="1.600" width="8" height="5" fill="#f6f6f6" stroke="#888" stroke-width="0.800"/><rect x="0.800" y="5.600" width="14.400" height="6.800" rx="1.800" fill="#c4c4c4" stroke="#999" stroke-width="0.800"/><rect x="3.600" y="10" width="8.800" height="4.800" fill="#f6f6f6" stroke="#999" stroke-width="0.800"/></g></symbol>
<symbol id="s-r_mode" viewBox="0 0 16 16" overflow="visible"><rect x="1" y="2.400" width="13.600" height="12" fill="#e1e1e1" stroke="#555" stroke-width="0.800" stroke-dasharray="1.600 1.200"/><circle cx="5.400" cy="5" r="4.400" fill="#5f8fca" stroke="#3c6ca6" stroke-width="0.600"/><text x="4" y="8" font-size="8" font-style="italic" font-weight="bold" font-family="Liberation Serif, serif" fill="#fff">i</text><path d="M8 6.400l0.200 8.200 2-1.800 1.400 2.800 1.400-0.700-1.400-2.700 2.600-0.300z" fill="#fff" stroke="#444" stroke-width="0.700" stroke-linejoin="round"/></symbol>
<symbol id="s-r_wrench" viewBox="0 0 16 16" overflow="visible"><path d="M7 7l7.200 6.600" stroke="#5c5230" stroke-width="3.600" stroke-linecap="round"/><path d="M7.200 7.200l6.800 6.200" stroke="#e9cf76" stroke-width="2.300" stroke-linecap="round"/><path d="M1.400 4.200a3.600 3.600 0 0 1 4.800-3.200L4 3.200l0.600 2 2 0.600 2.200-2.200a3.600 3.600 0 0 1-4.600 4.600c-1.400-0.400-2.400-1.600-2.800-4z" fill="#dedede" stroke="#5a5a5a" stroke-width="0.800"/></symbol>
<symbol id="s-r_help" viewBox="0 0 16 16" overflow="visible"><rect x="1.400" y="0.800" width="13.200" height="14.400" rx="0.800" fill="#5f8fca" stroke="#1f2e44" stroke-width="0.900"/><rect x="1.400" y="0.800" width="3.600" height="14.400" fill="#2c3e58" stroke="#1f2e44" stroke-width="0.900"/><text x="7.400" y="11.600" font-size="9.500" font-family="Liberation Serif, serif" fill="#fff">?</text></symbol>
</defs></svg>
<div id="title">
<svg class="abs" style="left:8px;top:7px" width="17" height="16" viewBox="0 0 17 16"><circle cx="7.6" cy="7.4" r="5.3" fill="none" stroke="#78ad30" stroke-width="3.600"/><path d="M8 8 L15 14.6" stroke="#8cbf3f" stroke-width="3.4" stroke-linecap="round"/><path d="M8.3 8.2 L14.6 14.2" stroke="#c3de7c" stroke-width="1.2" stroke-linecap="round"/><circle cx="7.7" cy="7.6" r="1.9" fill="#f29a3b"/><circle cx="7.4" cy="7.3" r="0.9" fill="#fcd9a0"/></svg>
<div class="t" style="transform:scaleX(0.949);transform-origin:0 50%;">*tomioka — QGIS</div>
<svg class="abs" style="left:1760px;top:0" width="132" height="31" viewBox="0 0 132 31"><path d="M12 15.5h10" stroke="#111" stroke-width="1"/><rect x="57.5" y="10.5" width="9" height="9" fill="none" stroke="#111" stroke-width="1"/><path d="M103 10.300l10 10M113 10.300l-10 10" stroke="#111" stroke-width="1.100"/></svg>
</div>
<div id="menu">
<span style="transform:scaleX(0.660);transform-origin:0 50%;left:11.1px">プロジェクト</span><span style="transform:scaleX(0.829);transform-origin:0 50%;font-size:12px;top:2px;left:62.6px">(<u>J</u>)</span>
<span style="transform:scaleX(0.935);transform-origin:0 50%;left:89.6px">編集</span><span style="transform:scaleX(0.780);transform-origin:0 50%;font-size:12px;top:2px;left:113.9px">(<u>E</u>)</span>
<span style="transform:scaleX(0.597);transform-origin:0 50%;left:141.6px">ビュー</span><span style="transform:scaleX(0.893);transform-origin:0 50%;font-size:12px;top:2px;left:164.9px">(<u>V</u>)</span>
<span style="transform:scaleX(0.692);transform-origin:0 50%;left:195px">レイヤ</span><span style="transform:scaleX(0.865);transform-origin:0 50%;font-size:12px;top:2px;left:222.0px">(<u>L</u>)</span>
<span style="transform:scaleX(0.915);transform-origin:0 50%;left:251px">設定</span><span style="transform:scaleX(0.780);transform-origin:0 50%;font-size:12px;top:2px;left:274.8px">(<u>S</u>)</span>
<span style="transform:scaleX(0.688);transform-origin:0 50%;left:301.9px">プラグイン</span><span style="transform:scaleX(0.855);transform-origin:0 50%;font-size:12px;top:2px;left:346.6px">(<u>P</u>)</span>
<span style="transform:scaleX(0.700);transform-origin:0 50%;left:375.7px">ベクタ</span><span style="transform:scaleX(0.928);transform-origin:0 50%;font-size:12px;top:2px;left:403.0px">(<u>O</u>)</span>
<span style="transform:scaleX(0.700);transform-origin:0 50%;left:434.1px">ラスタ</span><span style="transform:scaleX(0.774);transform-origin:0 50%;font-size:12px;top:2px;left:461.4px">(<u>R</u>)</span>
<span style="transform:scaleX(0.701);transform-origin:0 50%;left:488.7px">データベース</span><span style="transform:scaleX(0.822);transform-origin:0 50%;font-size:12px;top:2px;left:543.4px">(<u>D</u>)</span>
<span style="transform:scaleX(1.046);transform-origin:0 50%;font-size:12px;top:2px;left:571.9px">Web</span><span style="transform:scaleX(0.859);transform-origin:0 50%;font-size:12px;top:2px;left:597.5px">(<u>W</u>)</span>
<span style="transform:scaleX(0.692);transform-origin:0 50%;left:629px">メッシュ</span><span style="transform:scaleX(0.894);transform-origin:0 50%;font-size:12px;top:2px;left:665.0px">(<u>M</u>)</span>
<span style="transform:scaleX(0.828);transform-origin:0 50%;left:696.1px">ヘルプ</span><span style="transform:scaleX(0.744);transform-origin:0 50%;font-size:12px;top:2px;left:728.4px">(<u>H</u>)</span>
</div>
<div class="abs" style="left:0;top:50px;width:1892px;height:1px;background:#d6d6d6"></div>
<div class="tb" style="top:51px;height:39px"></div>
<div class="tb" style="top:90px;height:39px"></div>
<div class="tb" style="top:129px;height:39px"></div>
<div class="tb" style="top:168px;height:38px"></div>
<div class="abs" style="left:1px;top:1px;width:1px;height:1007px;background:#fcfcfc"></div>
<div class="abs" style="left:1890px;top:1px;width:1px;height:1007px;background:#fcfcfc"></div>
<i class="hd" style="left:6px;top:62px"></i>
<svg class="ic" style="left:18px;top:58px"><use href="#i-new"/></svg>
<svg class="ic" style="left:51px;top:58px"><use href="#i-open"/></svg>
<svg class="ic" style="left:84px;top:58px"><use href="#i-save"/></svg>
<svg class="ic" style="left:117px;top:58px"><use href="#i-newLayout"/></svg>
<svg class="ic" style="left:150px;top:58px"><use href="#i-layoutMgr"/></svg>
<svg class="ic" style="left:183px;top:58px"><use href="#i-styleMgr"/></svg>
<i class="hd" style="left:220px;top:62px"></i>
<svg class="ic" style="left:232px;top:58px"><use href="#i-pan"/></svg>
<svg class="ic" style="left:265px;top:58px"><use href="#i-panSel"/></svg>
<svg class="ic" style="left:298px;top:58px"><use href="#i-zoomIn"/></svg>
<svg class="ic" style="left:331px;top:58px"><use href="#i-zoomOut"/></svg>
<svg class="ic" style="left:364px;top:58px"><use href="#i-zoomFull"/></svg>
<svg class="ic" style="left:397px;top:58px"><use href="#i-zoomSel"/></svg>
<svg class="ic" style="left:430px;top:58px"><use href="#i-zoomLayer"/></svg>
<svg class="ic" style="left:463px;top:58px"><use href="#i-zoomNative"/></svg>
<svg class="ic" style="left:496px;top:58px"><use href="#i-zoomLast"/></svg>
<svg class="ic" style="left:529px;top:58px"><use href="#i-zoomNext"/></svg>
<svg class="ic" style="left:563px;top:58px"><use href="#i-newMap"/></svg>
<svg class="ic" style="left:596px;top:58px"><use href="#i-new3D"/></svg>
<svg class="ic" style="left:629px;top:58px"><use href="#i-newBookmark"/></svg>
<svg class="ic" style="left:662px;top:58px"><use href="#i-showBookmarks"/></svg>
<svg class="ic" style="left:694px;top:58px"><use href="#i-temporal"/></svg>
<svg class="ic" style="left:727px;top:58px"><use href="#i-refresh"/></svg>
<i class="hd" style="left:764px;top:62px"></i>
<i class="pressed" style="left:772px;top:55px;width:32px;height:31px"></i>
<svg class="ic" style="left:776px;top:58px"><use href="#i-identify"/></svg>
<svg class="ic" style="left:809px;top:58px"><use href="#i-fieldCalc"/></svg>
<svg class="ic" style="left:842px;top:58px"><use href="#i-sigma"/></svg>
<svg class="ic" style="left:875px;top:58px"><use href="#i-attrTable"/></svg>
<i class="dd" style="left:905px;top:68px"></i>
<svg class="ic" style="left:920px;top:58px"><use href="#i-measure"/></svg>
<i class="dd" style="left:950px;top:68px"></i>
<svg class="ic" style="left:965px;top:58px"><use href="#i-mapTips"/></svg>
<svg class="ic" style="left:998px;top:58px"><use href="#i-actions"/></svg>
<i class="dd dis" style="left:1028px;top:68px"></i>
<i class="hd" style="left:6px;top:101px"></i>
<svg class="ic" style="left:18.5px;top:97px"><use href="#i-dsm"/></svg>
<svg class="ic" style="left:51px;top:97px"><use href="#i-newGpkg"/></svg>
<svg class="ic" style="left:84px;top:97px"><use href="#i-newVector"/></svg>
<svg class="ic" style="left:117px;top:97px"><use href="#i-newSpatialite"/></svg>
<svg class="ic" style="left:150.5px;top:97px"><use href="#i-newMemory"/></svg>
<svg class="ic" style="left:183px;top:97px"><use href="#i-newMesh"/></svg>
<i class="vsep" style="left:215px;top:99.5px"></i>
<svg class="ic" style="left:223px;top:97px"><use href="#i-newVirtual"/></svg>
<i class="vsep" style="left:255px;top:99.5px"></i>
<i class="hd" style="left:267px;top:101px"></i>
<svg class="ic" style="left:279px;top:97px"><use href="#i-currentEdits"/></svg>
<i class="dds dis" style="left:299.0px;top:118.0px"></i>
<svg class="ic" style="left:311px;top:97px"><use href="#i-toggleEdit"/></svg>
<svg class="ic" style="left:344px;top:97px"><use href="#i-saveEdits"/></svg>
<svg class="ic" style="left:378.5px;top:97px"><use href="#i-addFeature"/></svg>
<svg class="ic" style="left:412px;top:97px"><use href="#i-vertexTool"/></svg>
<i class="dd dis" style="left:441px;top:107px"></i>
<svg class="ic" style="left:456px;top:97px"><use href="#i-modifyAttr"/></svg>
<svg class="ic" style="left:488px;top:97px"><use href="#i-deleteSel"/></svg>
<svg class="ic" style="left:522px;top:97px"><use href="#i-cut"/></svg>
<svg class="ic" style="left:555px;top:97px"><use href="#i-copyF"/></svg>
<svg class="ic" style="left:588px;top:97px"><use href="#i-pasteF"/></svg>
<svg class="ic" style="left:621px;top:97px"><use href="#i-undo"/></svg>
<svg class="ic" style="left:654px;top:97px"><use href="#i-redo"/></svg>
<i class="hd" style="left:691px;top:101px"></i>
<svg class="ic" style="left:701.5px;top:97px"><use href="#i-label"/></svg>
<svg class="ic" style="left:736px;top:97px"><use href="#i-diagram"/></svg>
<i class="vsep" style="left:768px;top:99.5px"></i>
<svg class="ic" style="left:776px;top:97px"><use href="#i-labelPin"/></svg>
<svg class="ic" style="left:808px;top:97px"><use href="#i-labelRed"/></svg>
<i class="vsep" style="left:841px;top:99.5px"></i>
<svg class="ic" style="left:849px;top:97px"><use href="#i-lblD1"/></svg>
<svg class="ic" style="left:882px;top:97px"><use href="#i-lblD2"/></svg>
<svg class="ic" style="left:915px;top:97px"><use href="#i-lblD3"/></svg>
<svg class="ic" style="left:948px;top:97px"><use href="#i-lblD4"/></svg>
<svg class="ic" style="left:981px;top:97px"><use href="#i-lblD5"/></svg>
<i class="hd" style="left:1018px;top:101px"></i>
<svg class="ic" style="left:1030px;top:97px"><use href="#i-grass"/></svg>
<svg class="ic" style="left:1063px;top:97px"><use href="#i-metasearch"/></svg>
<i class="hd" style="left:1100px;top:101px"></i>
<svg class="ic" style="left:1112px;top:97px"><use href="#i-python"/></svg>
<i class="hd" style="left:1149px;top:101px"></i>
<svg class="ic" style="left:1161px;top:97px"><use href="#i-help"/></svg>
<i class="hd" style="left:1198px;top:101px"></i>
<i class="hd" style="left:6px;top:140px"></i>
<svg class="ic" style="left:18px;top:136px"><use href="#i-r1"/></svg>
<svg class="ic" style="left:51px;top:136px"><use href="#i-r2"/></svg>
<svg class="ic" style="left:84px;top:136px"><use href="#i-r1"/></svg>
<svg class="ic" style="left:117px;top:136px"><use href="#i-r2"/></svg>
<svg class="ic" style="left:150.5px;top:136px"><use href="#i-r3"/></svg>
<svg class="ic" style="left:183.5px;top:136px"><use href="#i-r4"/></svg>
<svg class="ic" style="left:217.5px;top:136px"><use href="#i-r5"/></svg>
<svg class="ic" style="left:250.5px;top:136px"><use href="#i-r6"/></svg>
<svg class="ic" style="left:284px;top:136px"><use href="#i-r7"/></svg>
<svg class="ic" style="left:317px;top:136px"><use href="#i-r8"/></svg>
<i class="hd" style="left:694px;top:140px"></i>
<svg class="ic" style="left:706px;top:136px"><use href="#i-magnet"/></svg>
<svg class="ic" style="left:740px;top:136px"><use href="#i-tracing"/></svg>
<i class="dds dis" style="left:759.5px;top:157.0px"></i>
<i class="pressed" style="left:768px;top:134px;width:32px;height:30px"></i>
<svg class="ic" style="left:772px;top:136px"><use href="#i-snapMode"/></svg>
<i class="dds dis" style="left:792.5px;top:157.0px"></i>
<div class="abs" style="left:801.500px;top:138px;width:81px;height:21px;border:1px solid #b5b5b5;border-radius:3px;background:#f1f1f1"><span class="abs" style="left:4.500px;top:2.500px;line-height:15px;color:#7c7c7c">12</span><i class="abs" style="left:66px;top:0;width:1px;height:19px;background:#c3c3c3"></i><svg class="abs" style="left:69px;top:3px" width="8" height="14" viewBox="0 0 8 14"><path d="M0.500 5L4 1l3.500 4zM0.500 9L4 13l3.500-4z" fill="#9c9c9c"/></svg></div>
<div class="abs" style="left:884px;top:138px;width:65px;height:21px;border:1px solid #c0c0c0;border-radius:3px;background:linear-gradient(#fcfcfc,#f1f1f1)"><span class="abs" style="left:4px;top:2.500px;line-height:15px;color:#7c7c7c">px</span><i class="dd dis" style="left:49px;top:8px"></i></div>
<svg class="ic" style="left:954px;top:136px"><use href="#i-topo"/></svg>
<svg class="ic" style="left:987px;top:136px"><use href="#i-overlap"/></svg>
<i class="dds" style="left:1007.5px;top:157.0px"></i>
<svg class="ic" style="left:1020px;top:136px"><use href="#i-snapX"/></svg>
<svg class="ic" style="left:1053px;top:136px"><use href="#i-selfSnap"/></svg>
<i class="dd dis" style="left:1083px;top:146px"></i>
<svg class="ic" style="left:1097px;top:136px"><use href="#i-advDigit"/></svg>
<i class="hd" style="left:6px;top:179px"></i>
<svg class="ic" style="left:18.5px;top:175px"><use href="#i-dg1"/></svg>
<i class="dd dis" style="left:48px;top:185px"></i>
<svg class="ic" style="left:63.5px;top:175px"><use href="#i-dg2"/></svg>
<i class="dd dis" style="left:93px;top:185px"></i>
<svg class="ic" style="left:108px;top:175px"><use href="#i-dg3"/></svg>
<i class="dd dis" style="left:138px;top:185px"></i>
<svg class="ic" style="left:153.5px;top:175px"><use href="#i-dg4"/></svg>
<i class="dd dis" style="left:183px;top:185px"></i>
<svg class="ic" style="left:198px;top:175px"><use href="#i-dg5"/></svg>
<i class="dd dis" style="left:228px;top:185px"></i>
<i class="hd" style="left:247px;top:179px"></i>
<svg class="ic" style="left:259px;top:175px"><use href="#i-copyFeat"/></svg>
<svg class="ic" style="left:292px;top:175px"><use href="#i-pinMap"/></svg>
<svg class="ic" style="left:325px;top:175px"><use href="#i-zoomDot"/></svg>
<svg class="ic" style="left:358px;top:175px"><use href="#i-zoomDots"/></svg>
<svg class="ic" style="left:391px;top:175px"><use href="#i-selLoc"/></svg>
<i class="dd" style="left:421px;top:185px"></i>
<svg class="ic" style="left:436px;top:175px"><use href="#i-globeHat"/></svg>
<svg class="ic" style="left:470px;top:175px"><use href="#i-xy"/></svg>
<svg class="ic" style="left:502px;top:175px"><use href="#i-wrench"/></svg>
<i class="hd" style="left:539px;top:179px"></i>
<svg class="ic" style="left:551px;top:175px"><use href="#i-select"/></svg>
<i class="dd" style="left:581px;top:185px"></i>
<svg class="ic" style="left:596px;top:175px"><use href="#i-selValue"/></svg>
<i class="dd" style="left:626px;top:185px"></i>
<svg class="ic" style="left:642px;top:175px"><use href="#i-deselect"/></svg>
<i class="dd" style="left:671px;top:185px"></i>
<i class="hd" style="left:690px;top:179px"></i>
<svg class="ic" style="left:702px;top:175px"><use href="#i-editForm"/></svg>
<svg class="ic" style="left:735px;top:175px"><use href="#i-selTable"/></svg>
<i class="dd dis" style="left:765px;top:185px"></i>
<svg class="ic" style="left:780px;top:175px"><use href="#i-meshEd1"/></svg>
<svg class="ic" style="left:813px;top:175px"><use href="#i-meshEd2"/></svg>
<i class="dd dis" style="left:843px;top:185px"></i>
<i class="hd" style="left:862px;top:179px"></i>
<svg class="ic" style="left:874px;top:175px"><use href="#i-annot"/></svg>
<i class="dd" style="left:904px;top:185px"></i>
<svg class="ic" style="left:918px;top:175px"><use href="#i-selAnnot"/></svg>
<svg class="ic" style="left:952px;top:175px"><use href="#i-polyAnnot"/></svg>
<svg class="ic" style="left:985.5px;top:175px"><use href="#i-lineAnnot"/></svg>
<svg class="ic" style="left:1019px;top:175px"><use href="#i-starAnnot"/></svg>
<svg class="ic" style="left:1052px;top:175px"><use href="#i-textAnnot"/></svg>
<i class="vsep" style="left:1083px;top:177.5px"></i>
<svg class="ic" style="left:1091px;top:175px"><use href="#i-textBalloon"/></svg>
<i class="dd" style="left:1121px;top:185px"></i>
<i class="hd" style="left:1140px;top:179px"></i>
<svg class="ic" style="left:1152px;top:175px"><use href="#i-locator"/></svg>
<svg class="ic" style="left:1185px;top:175px"><use href="#i-mapBrush"/></svg>
<div class="ptitle" style="transform:scaleX(0.654);transform-origin:0 50%;left:5px;top:209.5px;font-size:13px">ブラウザ</div>
<svg class="abs" style="left:196.5px;top:211px" width="27" height="12" viewBox="0 0 27 12"><rect x="0.7" y="0.7" width="10.6" height="10.6" rx="2.3" fill="#f4f4f4" stroke="#666" stroke-width="1.2"/><rect x="4.6" y="2.8" width="4.2" height="4" fill="none" stroke="#555" stroke-width="0.9"/><rect x="2.9" y="4.6" width="4.2" height="4" fill="#f4f4f4" stroke="#555" stroke-width="0.9"/><rect x="14.9" y="0.7" width="10.6" height="10.6" rx="2.3" fill="#f4f4f4" stroke="#666" stroke-width="1.2"/><path d="M17.6 3.4l5.2 5.2M22.8 3.4l-5.2 5.2" stroke="#444" stroke-width="1.7"/></svg>
<svg class="ic16" style="left:9px;top:233px"><use href="#s-b_add"/></svg>
<svg class="ic16" style="left:34px;top:233px"><use href="#s-b_refresh"/></svg>
<svg class="ic16" style="left:58.5px;top:233px"><use href="#s-b_filter"/></svg>
<svg class="ic16" style="left:84.5px;top:233px"><use href="#s-b_collapse"/></svg>
<svg class="ic16" style="left:109px;top:233px"><use href="#s-b_info"/></svg>
<div class="frame" style="left:1px;top:257px;width:223px;height:406px;border-left-color:#fff">
<div class="row" style="top:1px">
<i class="tri-r" style="left:7px;top:5px"></i>
<svg class="ic16" style="left:19px;top:1px"><use href="#s-home"/></svg>
<span class="tx" style="transform:scaleX(0.692);transform-origin:0 50%;left:40.7px;font-size:13px">ホーム</span></div>
<div class="row" style="top:19px">
<i class="tri-r" style="left:7px;top:5px"></i>
<svg class="ic16" style="left:19px;top:1px"><use href="#s-folder"/></svg>
<span class="tx" style="transform:scaleX(0.856);transform-origin:0 50%;left:40.7px">C:¥</span></div>
<div class="row" style="top:37px">
<i class="tri-r" style="left:7px;top:5px"></i>
<svg class="ic16" style="left:19px;top:1px"><use href="#s-folder"/></svg>
<span class="tx" style="transform:scaleX(0.915);transform-origin:0 50%;left:40.7px">F:¥ (Elements)</span></div>
<div class="row" style="top:55px">
<i class="tri-r" style="left:7px;top:5px"></i>
<svg class="ic16" style="left:19px;top:1px"><use href="#s-folder"/></svg>
<span class="tx" style="transform:scaleX(0.963);transform-origin:0 50%;left:40.7px">H:¥</span></div>
<div class="row" style="top:73px">
<svg class="ic16" style="left:19px;top:1px"><use href="#s-gpkg"/></svg>
<span class="tx" style="transform:scaleX(0.937);transform-origin:0 50%;left:40.7px">GeoPackage</span></div>
<div class="row" style="top:91px">
<svg class="ic16" style="left:19px;top:1px"><use href="#s-spatialite"/></svg>
<span class="tx" style="transform:scaleX(0.956);transform-origin:0 50%;left:40.7px">SpatiaLite</span></div>
<div class="row" style="top:109px">
<i class="tri-d" style="left:6.2px;top:6.3px"></i>
<svg class="ic16" style="left:19px;top:1px"><use href="#s-postgis"/></svg>
<span class="tx" style="transform:scaleX(0.895);transform-origin:0 50%;left:40.7px">PostGIS</span></div>
<div class="row" style="top:127px">
<i class="tri-d" style="left:22.2px;top:6.3px"></i>
<svg class="ic16" style="left:35px;top:1px"><use href="#s-conn"/></svg>
<span class="tx" style="transform:scaleX(0.973);transform-origin:0 50%;left:56.7px">tomioka_db_c_trial</span></div>
<div class="row" style="top:145px">
<i class="tri-d" style="left:38.2px;top:6.3px"></i>
<svg class="ic16" style="left:51px;top:1px"><use href="#s-schema"/></svg>
<span class="tx" style="transform:scaleX(1.020);transform-origin:0 50%;left:72.7px">public</span></div>
<div class="row" style="top:163px">
<i class="tri-r" style="left:55px;top:5px"></i>
<svg class="ic16" style="left:67px;top:1px"><use href="#s-pts"/></svg>
<span class="tx" style="left:88.7px">pointsofinterest.new_geom</span></div>
<div class="row" style="top:181px">
<i class="tri-r" style="left:55px;top:5px"></i>
<svg class="ic16" style="left:67px;top:1px"><use href="#s-pts"/></svg>
<span class="tx" style="transform:scaleX(1.036);transform-origin:0 50%;left:88.7px">pointsofinterest.the_geom</span></div>
<div class="row" style="top:199px">
<i class="tri-r" style="left:55px;top:5px"></i>
<svg class="ic16" style="left:67px;top:1px"><use href="#s-line"/></svg>
<span class="tx" style="transform:scaleX(0.984);transform-origin:0 50%;left:88.7px">shortest</span></div>
<div class="row" style="top:217px">
<i class="tri-r" style="left:55px;top:5px"></i>
<svg class="ic16" style="left:67px;top:1px"><use href="#s-line"/></svg>
<span class="tx" style="transform:scaleX(0.951);transform-origin:0 50%;left:88.7px">ways</span></div>
<div class="row" style="top:235px;background:#f0f0f0;width:207px">
<i class="tri-r" style="left:55px;top:5px"></i>
<svg class="ic16" style="left:67px;top:1px"><use href="#s-ptsb"/></svg>
<span class="tx" style="transform:scaleX(0.946);transform-origin:0 50%;left:88.7px">ways_vertices_pgr</span></div>
<div class="row" style="top:253px">
<i class="tri-r" style="left:23px;top:5px"></i>
<svg class="ic16" style="left:35px;top:1px"><use href="#s-conn"/></svg>
<span class="tx" style="transform:scaleX(0.986);transform-origin:0 50%;left:56.7px">tomiokaC</span></div>
<div class="row" style="top:271px">
<i class="tri-r" style="left:23px;top:5px"></i>
<svg class="ic16" style="left:35px;top:1px"><use href="#s-conn"/></svg>
<span class="tx" style="transform:scaleX(0.963);transform-origin:0 50%;left:56.7px">tsuzuki_bus</span></div>
<div class="row" style="top:289px">
<i class="tri-r" style="left:23px;top:5px"></i>
<svg class="ic16" style="left:35px;top:1px"><use href="#s-conn"/></svg>
<span class="tx" style="transform:scaleX(0.966);transform-origin:0 50%;left:56.7px">tsuzuki_rail</span></div>
<div class="row" style="top:307px">
<i class="tri-r" style="left:23px;top:5px"></i>
<svg class="ic16" style="left:35px;top:1px"><use href="#s-conn"/></svg>
<span class="tx" style="transform:scaleX(0.963);transform-origin:0 50%;left:56.7px">tsuzuki_sub</span></div>
<div class="row" style="top:325px">
<i class="tri-r" style="left:23px;top:5px"></i>
<svg class="ic16" style="left:35px;top:1px"><use href="#s-conn"/></svg>
<span class="tx" style="transform:scaleX(0.962);transform-origin:0 50%;left:56.7px">utsu_tram_db2</span></div>
<div class="row" style="top:343px">
<i class="tri-r" style="left:23px;top:5px"></i>
<svg class="ic16" style="left:35px;top:1px"><use href="#s-conn"/></svg>
<span class="tx" style="transform:scaleX(0.962);transform-origin:0 50%;left:56.7px">utsu_tram_db3</span></div>
<div class="row" style="top:361px">
<svg class="ic16" style="left:19px;top:1px"><use href="#s-hana"/></svg>
<span class="tx" style="transform:scaleX(0.959);transform-origin:0 50%;left:40.7px">SAP HANA</span></div>
<div class="row" style="top:379px">
<svg class="ic16" style="left:19px;top:1px"><use href="#s-mssql"/></svg>
<span class="tx" style="transform:scaleX(0.881);transform-origin:0 50%;left:40.7px">MSSQL</span></div>
<div class="sbv" style="left:207px;top:0;width:15px;height:390px"></div>
<div class="sbtn" style="left:207px;top:-1px;width:16px;height:15px"></div><svg class="abs" style="left:211.5px;top:4px" width="8" height="5"><path d="M0 4.5L4 0.3L8 4.5Z" fill="#505050"/></svg>
<div class="thumb" style="left:207px;top:43px;width:16px;height:220px"></div>
<div class="sbtn" style="left:207px;top:375px;width:16px;height:16px"></div><svg class="abs" style="left:211.5px;top:381px" width="8" height="5"><path d="M0 0.3L4 4.5L8 0.3Z" fill="#505050"/></svg>
<div class="abs" style="left:0;top:390px;width:223px;height:15px;background:#e3e3e3;border-top:1px solid #b6b6b6"></div>
<div class="sbtn" style="left:-1px;top:390px;width:16px;height:15px"></div><svg class="abs" style="left:4px;top:394px" width="5" height="8"><path d="M4.6 0L0.3 4L4.6 8Z" fill="#505050"/></svg>
<div class="thumbh" style="left:14px;top:390px;width:158px;height:15px"></div>
<div class="sbtn" style="left:194px;top:390px;width:15px;height:15px"></div><svg class="abs" style="left:199px;top:394px" width="5" height="8"><path d="M0.3 0L4.7 4L0.3 8Z" fill="#505050"/></svg>
<div class="abs" style="left:207px;top:390px;width:16px;height:15px;background:#efefef;border-left:1px solid #b6b6b6;border-top:1px solid #b6b6b6"></div>
</div>
<i class="abs" style="left:106px;top:665px;width:17px;height:1px;background-image:linear-gradient(90deg,#bdbdbd 1px,transparent 1px);background-size:3px 1px"></i>
<div class="ptitle" style="transform:scaleX(0.685);transform-origin:0 50%;left:5px;top:671.5px;font-size:13px">レイヤ</div>
<svg class="abs" style="left:196.5px;top:672.5px" width="27" height="12" viewBox="0 0 27 12"><rect x="0.7" y="0.7" width="10.6" height="10.6" rx="2.3" fill="#f4f4f4" stroke="#666" stroke-width="1.2"/><rect x="4.6" y="2.8" width="4.2" height="4" fill="none" stroke="#555" stroke-width="0.9"/><rect x="2.9" y="4.6" width="4.2" height="4" fill="#f4f4f4" stroke="#555" stroke-width="0.9"/><rect x="14.9" y="0.7" width="10.6" height="10.6" rx="2.3" fill="#f4f4f4" stroke="#666" stroke-width="1.2"/><path d="M17.6 3.4l5.2 5.2M22.8 3.4l-5.2 5.2" stroke="#444" stroke-width="1.7"/></svg>
<svg class="ic16" style="left:9px;top:695px"><use href="#s-l_style"/></svg>
<svg class="ic16" style="left:34px;top:695px"><use href="#s-l_group"/></svg>
<svg class="ic16" style="left:59px;top:695px"><use href="#s-l_eye"/></svg>
<svg class="ic16" style="left:84px;top:695px"><use href="#s-l_filter"/></svg>
<svg class="ic16" style="left:109px;top:695px"><use href="#s-l_expr"/></svg>
<svg class="ic16" style="left:146px;top:695px"><use href="#s-l_expand"/></svg>
<svg class="ic16" style="left:171.5px;top:695px"><use href="#s-l_collapse"/></svg>
<svg class="ic16" style="left:196px;top:695px"><use href="#s-l_remove"/></svg>
<i class="dd" style="left:131px;top:701px"></i>
<div class="frame" style="left:1px;top:719px;width:223px;height:300px;border-left-color:#fff">
<div class="abs" style="left:0;top:1px;width:221px;height:18px;background:#f0f0f0"></div>
<svg class="abs" style="left:23px;top:1.5px" width="14" height="14" viewBox="0 0 14 14"><rect x="0.5" y="0.5" width="13" height="13" fill="#fff" stroke="#b9b9b9"/><path d="M3.3 7.2L5.8 10.2L10.6 3.4" fill="none" stroke="#111" stroke-width="1.7"/></svg>
<svg class="abs" style="left:23px;top:19.5px" width="14" height="14" viewBox="0 0 14 14"><rect x="0.5" y="0.5" width="13" height="13" fill="#fff" stroke="#b9b9b9"/><path d="M3.3 7.2L5.8 10.2L10.6 3.4" fill="none" stroke="#111" stroke-width="1.7"/></svg>
<svg class="abs" style="left:45px;top:3px" width="12" height="12"><circle cx="5.9" cy="5.4" r="3" fill="#7fb77e" stroke="#5f8f6a" stroke-width="0.8"/></svg>
<div class="abs" style="transform:scaleX(0.946);transform-origin:0 50%;left:65px;top:1px;line-height:18px;text-decoration:underline;text-underline-offset:1.5px;white-space:nowrap" id="lyr1">ways_vertices_pgr</div>
<i class="abs" style="left:43.500px;top:26.200px;width:14px;height:1.800px;background:#a590d2"></i>
<div class="abs" style="transform:scaleX(0.951);transform-origin:0 50%;left:63.500px;top:19px;line-height:18px;white-space:nowrap">ways</div>
</div>
<div class="abs" style="left:230px;top:207px;width:1278px;height:810px;background:#fff;border:1px solid #a5a5a5"></div>
<svg class="abs" style="left:231px;top:208px" width="1276" height="800" viewBox="231 208 1276 800">
<polyline fill="none" stroke="#9273b9" stroke-width="1" stroke-opacity="0.97" points="255,203 259.7,207 311.3,246.7 455.4,343.1 718.9,436"/>
<polyline fill="none" stroke="#9273b9" stroke-width="1" stroke-opacity="0.97" points="560,203 567.3,207 599,224.8 682,297"/>
<polyline fill="none" stroke="#9273b9" stroke-width="1" stroke-opacity="0.97" points="682,297 825.2,229.6 868,217 901.7,207 915,203"/>
<polyline fill="none" stroke="#9273b9" stroke-width="1" stroke-opacity="0.97" points="682,297 699,342.7 719.7,387 718.9,436 702.2,501.4 683.5,541.5 700.2,605 717.7,668.9 718.9,686.7"/>
<polyline fill="none" stroke="#9273b9" stroke-width="1" stroke-opacity="0.97" points="225,483.5 230,482.8 302.6,472 423.6,534 427.2,605 433.6,716.9 432.8,732"/>
<polyline fill="none" stroke="#9273b9" stroke-width="1" stroke-opacity="0.97" points="416.9,702.6 433.6,716.9"/>
<polyline fill="none" stroke="#9273b9" stroke-width="1" stroke-opacity="0.97" points="948,203 957.3,207 1059.7,253.4 1231.9,472.8 1237.9,486.9"/>
<polyline fill="none" stroke="#9273b9" stroke-width="1" stroke-opacity="0.97" points="1204.9,469.9 1215,481.8 1223.1,494.9 1297.8,605 1369.6,712.9"/>
<polyline fill="none" stroke="#9273b9" stroke-width="1" stroke-opacity="0.97" points="225,736.1 416.9,702.6 747.8,647.6 856.3,628 981.8,584.9 1204.9,469.9 1512,329.4"/>
<polyline fill="none" stroke="#9273b9" stroke-width="1" stroke-opacity="0.97" points="225,751.2 433.6,716.9 717.7,668.9 751,663.7 859.8,643.8 988.7,599.9 1215,481.8 1231.9,472.8 1512,340"/>
<polyline fill="none" stroke="#9273b9" stroke-width="1" stroke-opacity="0.97" points="225,764.6 432.8,732 718.9,686.7 862.8,659.6 1000.9,610.8 1237.9,486.9 1512,350.4"/>
<polyline fill="none" stroke="#9273b9" stroke-width="1" stroke-opacity="0.97" points="856.3,628 859.8,643.8 862.8,659.6"/>
<polyline fill="none" stroke="#9273b9" stroke-width="1" stroke-opacity="0.97" points="981.8,584.9 988.7,599.9 1000.9,610.8"/>
<polyline fill="none" stroke="#9273b9" stroke-width="1" stroke-opacity="0.97" points="747.8,647.6 751,663.7 764.9,898.8 771.7,1005 772.3,1012"/>
<polyline fill="none" stroke="#9273b9" stroke-width="1" stroke-opacity="0.97" points="764.9,898.8 868,870.1 1048.6,821.3 1196.6,760.6 1369.6,712.9"/>
<polyline fill="none" stroke="#9273b9" stroke-width="1" stroke-opacity="0.97" points="1369.6,712.9 1428.3,746.7 1419.6,773.7 1420.8,800.2 1467.2,815.7 1512,819.6"/>
<circle cx="682" cy="297" r="3.400" fill="#bfd24f" stroke="#2f2f28" stroke-width="1.150"/>
<circle cx="718.9" cy="436" r="3.400" fill="#bfd24f" stroke="#2f2f28" stroke-width="1.150"/>
<circle cx="416.9" cy="702.6" r="3.400" fill="#bfd24f" stroke="#2f2f28" stroke-width="1.150"/>
<circle cx="433.6" cy="716.9" r="3.400" fill="#bfd24f" stroke="#2f2f28" stroke-width="1.150"/>
<circle cx="432.8" cy="732" r="3.400" fill="#bfd24f" stroke="#2f2f28" stroke-width="1.150"/>
<circle cx="717.7" cy="668.9" r="3.400" fill="#bfd24f" stroke="#2f2f28" stroke-width="1.150"/>
<circle cx="718.9" cy="686.7" r="3.400" fill="#bfd24f" stroke="#2f2f28" stroke-width="1.150"/>
<circle cx="747.8" cy="647.6" r="3.400" fill="#bfd24f" stroke="#2f2f28" stroke-width="1.150"/>
<circle cx="751" cy="663.7" r="3.400" fill="#bfd24f" stroke="#2f2f28" stroke-width="1.150"/>
<circle cx="856.3" cy="628" r="3.400" fill="#bfd24f" stroke="#2f2f28" stroke-width="1.150"/>
<circle cx="859.8" cy="643.8" r="3.400" fill="#bfd24f" stroke="#2f2f28" stroke-width="1.150"/>
<circle cx="862.8" cy="659.6" r="3.400" fill="#bfd24f" stroke="#2f2f28" stroke-width="1.150"/>
<circle cx="981.8" cy="584.9" r="3.400" fill="#bfd24f" stroke="#2f2f28" stroke-width="1.150"/>
<circle cx="988.7" cy="599.9" r="3.400" fill="#bfd24f" stroke="#2f2f28" stroke-width="1.150"/>
<circle cx="1000.9" cy="610.8" r="3.400" fill="#bfd24f" stroke="#2f2f28" stroke-width="1.150"/>
<circle cx="1204.9" cy="469.9" r="3.400" fill="#bfd24f" stroke="#2f2f28" stroke-width="1.150"/>
<circle cx="1215" cy="481.8" r="3.400" fill="#bfd24f" stroke="#2f2f28" stroke-width="1.150"/>
<circle cx="1231.9" cy="472.8" r="3.400" fill="#bfd24f" stroke="#2f2f28" stroke-width="1.150"/>
<circle cx="1237.9" cy="486.9" r="3.400" fill="#bfd24f" stroke="#2f2f28" stroke-width="1.150"/>
<circle cx="764.9" cy="898.8" r="3.400" fill="#bfd24f" stroke="#2f2f28" stroke-width="1.150"/>
<circle cx="1369.6" cy="712.9" r="3.400" fill="#bfd24f" stroke="#2f2f28" stroke-width="1.150"/>
<line x1="856.3" y1="628" x2="981.8" y2="584.9" stroke="#ff0000" stroke-width="4.400" stroke-linecap="square"/>
</svg>
<i class="abs" style="left:227px;top:601px;width:1px;height:17px;background-image:linear-gradient(#bdbdbd 1px,transparent 1px);background-size:1px 3px"></i>
<i class="abs" style="left:1511px;top:601px;width:1px;height:17px;background-image:linear-gradient(#bdbdbd 1px,transparent 1px);background-size:1px 3px"></i>
<div class="ptitle" style="transform:scaleX(0.892);transform-origin:0 50%;left:1519px;top:209.5px;font-size:13px">地物情報</div>
<svg class="abs" style="left:1864px;top:211.5px" width="27" height="12" viewBox="0 0 27 12"><rect x="0.7" y="0.7" width="10.6" height="10.6" rx="2.3" fill="#f4f4f4" stroke="#666" stroke-width="1.2"/><rect x="4.6" y="2.8" width="4.2" height="4" fill="none" stroke="#555" stroke-width="0.9"/><rect x="2.9" y="4.6" width="4.2" height="4" fill="#f4f4f4" stroke="#555" stroke-width="0.9"/><rect x="14.9" y="0.7" width="10.6" height="10.6" rx="2.3" fill="#f4f4f4" stroke="#666" stroke-width="1.2"/><path d="M17.6 3.4l5.2 5.2M22.8 3.4l-5.2 5.2" stroke="#444" stroke-width="1.7"/></svg>
<i class="pressed" style="left:1600px;top:229.500px;width:24px;height:23px"></i>
<svg class="ic16" style="left:1522px;top:232.5px"><use href="#s-r_form"/></svg>
<svg class="ic16" style="left:1554.5px;top:232.5px"><use href="#s-l_expand"/></svg>
<svg class="ic16" style="left:1579.5px;top:232.5px"><use href="#s-l_collapse"/></svg>
<svg class="ic16" style="left:1604px;top:232.5px"><use href="#s-r_expandnew"/></svg>
<svg class="ic16" style="left:1636.5px;top:232.5px"><use href="#s-r_clear"/></svg>
<svg class="ic16" style="left:1668px;top:232.5px"><use href="#s-r_copy"/></svg>
<svg class="ic16" style="left:1693px;top:232.5px"><use href="#s-r_print"/></svg>
<svg class="ic16" style="left:1725px;top:232.5px"><use href="#s-r_mode"/></svg>
<svg class="ic16" style="left:1763px;top:232.5px"><use href="#s-r_wrench"/></svg>
<svg class="ic16" style="left:1794px;top:232.5px"><use href="#s-r_help"/></svg>
<i class="vsep" style="left:1546px;top:236px;height:11px;background:#cdcdcd"></i>
<i class="vsep" style="left:1629px;top:236px;height:11px;background:#cdcdcd"></i>
<i class="vsep" style="left:1660px;top:236px;height:11px;background:#cdcdcd"></i>
<i class="vsep" style="left:1717px;top:236px;height:11px;background:#cdcdcd"></i>
<i class="vsep" style="left:1787px;top:236px;height:11px;background:#cdcdcd"></i>
<i class="dd" style="left:1747px;top:239px"></i>
<div class="frame" style="left:1514px;top:257px;width:377px;height:684px">
<div class="abs" style="left:0;top:0;width:375px;height:20px;background:linear-gradient(#fff,#f6f6f6 50%,#ebebeb);border-bottom:1px solid #a9a9a9"></div>
<div class="abs" style="left:201px;top:1px;width:1px;height:17px;background:#c6c6c6"></div>
<div class="abs" style="transform:scaleX(0.904);transform-origin:0 50%;left:3.5px;top:1px;line-height:17px;font-size:13px">地物</div><div class="abs" style="transform:scaleX(0.846);transform-origin:0 50%;left:205px;top:1px;line-height:17px;font-size:13px">値</div>
<div class="r15" style="top:20px;height:15px;line-height:15px">
<i class="tri-d" style="left:2.5px;top:5.5px"></i>
<span class="k" style="transform:scaleX(0.886);transform-origin:0 50%;left:16px;font-weight:bold">ways</span>
</div>
<div class="r15" style="top:35px;height:15px;line-height:15px;background:#f0f0f0">
<i class="tri-d" style="left:14.5px;top:5.5px"></i>
<span class="k" style="transform:scaleX(0.932);transform-origin:0 50%;left:28px">name</span>
<span class="v" style="transform:scaleX(0.969);transform-origin:0 50%;">TomioCart</span>
</div>
<div class="r15" style="top:50px;height:15px;line-height:15px">
<i class="tri-d" style="left:26.5px;top:5.5px"></i>
<span class="k" style="transform:scaleX(0.835);transform-origin:0 50%;left:40px;font-size:13px;top:-1px">(派生した属性)</span>
</div>
<div class="r15" style="top:65px;height:15px;line-height:15px;background:#e9e7e3">
<span class="k" style="transform:scaleX(0.742);transform-origin:0 50%;left:52px;font-size:13px;top:-1px">(クリックされたX座標)</span>
<span class="v" style="transform:scaleX(0.899);transform-origin:0 50%;">139.628502</span>
</div>
<div class="r15" style="top:80px;height:15px;line-height:15px">
<span class="k" style="transform:scaleX(0.742);transform-origin:0 50%;left:52px;font-size:13px;top:-1px">(クリックされたY座標)</span>
<span class="v" style="transform:scaleX(0.899);transform-origin:0 50%;">35.367303</span>
</div>
<div class="r15" style="top:95px;height:15px;line-height:15px;background:#e9e7e3">
<span class="k" style="transform:scaleX(0.890);transform-origin:0 50%;left:52px;font-size:13px;top:-1px">地物ID</span>
<span class="v" style="transform:scaleX(0.899);transform-origin:0 50%;">837</span>
</div>
<div class="r15" style="top:110px;height:15px;line-height:15px">
<span class="k" style="transform:scaleX(0.854);transform-origin:0 50%;left:52px;font-size:13px;top:-1px">最初のX</span>
<span class="v" style="transform:scaleX(0.899);transform-origin:0 50%;">139.628574</span>
</div>
<div class="r15" style="top:125px;height:15px;line-height:15px;background:#e9e7e3">
<span class="k" style="transform:scaleX(0.833);transform-origin:0 50%;left:52px;font-size:13px;top:-1px">最初のY</span>
<span class="v" style="transform:scaleX(0.899);transform-origin:0 50%;">35.367319</span>
</div>
<div class="r15" style="top:140px;height:15px;line-height:15px">
<span class="k" style="transform:scaleX(0.854);transform-origin:0 50%;left:52px;font-size:13px;top:-1px">最後のX</span>
<span class="v" style="transform:scaleX(0.899);transform-origin:0 50%;">139.628423</span>
</div>
<div class="r15" style="top:155px;height:15px;line-height:15px;background:#e9e7e3">
<span class="k" style="transform:scaleX(0.833);transform-origin:0 50%;left:52px;font-size:13px;top:-1px">最後のY</span>
<span class="v" style="transform:scaleX(0.881);transform-origin:0 50%;">35.367281</span>
</div>
<div class="r15" style="top:170px;height:15px;line-height:15px">
<span class="k" style="transform:scaleX(0.867);transform-origin:0 50%;left:52px;font-size:13px;top:-1px">最近傍のX</span>
<span class="v" style="transform:scaleX(0.899);transform-origin:0 50%;">139.628502</span>
</div>
<div class="r15" style="top:185px;height:15px;line-height:15px;background:#e9e7e3">
<span class="k" style="transform:scaleX(0.850);transform-origin:0 50%;left:52px;font-size:13px;top:-1px">最近傍のY</span>
<span class="v" style="transform:scaleX(0.899);transform-origin:0 50%;">35.367303</span>
</div>
<div class="r15" style="top:200px;height:15px;line-height:15px">
<span class="k" style="transform:scaleX(0.887);transform-origin:0 50%;left:52px;font-size:13px;top:-1px">最近傍の頂点X</span>
<span class="v" style="transform:scaleX(0.899);transform-origin:0 50%;">139.628574</span>
</div>
<div class="r15" style="top:215px;height:15px;line-height:15px;background:#e9e7e3">
<span class="k" style="transform:scaleX(0.878);transform-origin:0 50%;left:52px;font-size:13px;top:-1px">最近傍の頂点Y</span>
<span class="v" style="transform:scaleX(0.899);transform-origin:0 50%;">35.367319</span>
</div>
<div class="r15" style="top:230px;height:15px;line-height:15px">
<span class="k" style="transform:scaleX(0.899);transform-origin:0 50%;left:52px;font-size:13px;top:-1px">最近傍の頂点番号</span>
<span class="v" style="transform:scaleX(0.897);transform-origin:0 50%;">1</span>
</div>
<div class="r15" style="top:245px;height:15px;line-height:15px;background:#e9e7e3">
<span class="k" style="transform:scaleX(0.696);transform-origin:0 50%;left:52px;font-size:13px;top:-1px">長さ（デカルト）</span>
<span class="v" style="transform:scaleX(0.842);transform-origin:0 50%;font-size:13px;top:-1px">0.000 度</span>
</div>
<div class="r15" style="top:260px;height:15px;line-height:15px">
<span class="k" style="transform:scaleX(0.836);transform-origin:0 50%;left:52px;font-size:13px;top:-1px">長さ（楕円体 — EPSG:703...</span>
<span class="v" style="transform:scaleX(0.919);transform-origin:0 50%;">14.299 m</span>
</div>
<div class="r15" style="top:275px;height:15px;line-height:15px;background:#e9e7e3">
<span class="k" style="transform:scaleX(0.877);transform-origin:0 50%;left:52px;font-size:13px;top:-1px">頂点</span>
<span class="v" style="transform:scaleX(0.897);transform-origin:0 50%;">2</span>
</div>
<div class="r15" style="top:290px;height:15px;line-height:15px">
<i class="tri-d" style="left:26.5px;top:5.5px"></i>
<span class="k" style="transform:scaleX(0.696);transform-origin:0 50%;left:40px;font-size:13px;top:-1px">(アクション)</span>
</div>
<div class="r15" style="top:305px;height:18px;line-height:18px;background:#e9e7e3">
<svg class="ic16" style="left:52px;top:1px;width:14px;height:14px"><use href="#s-r_form"/></svg>
<span class="v" style="transform:scaleX(0.746);transform-origin:0 50%;font-size:13px;top:-1px">地物フォームを見る</span>
</div>
<div class="r15" style="top:323px;height:15px;line-height:15px">
<span class="k" style="transform:scaleX(1.061);transform-origin:0 50%;left:40px">gid</span>
<span class="v" style="transform:scaleX(0.899);transform-origin:0 50%;">135</span>
</div>
<div class="r15" style="top:338px;height:15px;line-height:15px;background:#e9e7e3">
<span class="k" style="transform:scaleX(0.956);transform-origin:0 50%;left:40px">osm_id</span>
<span class="v" style="transform:scaleX(0.899);transform-origin:0 50%;">104342</span>
</div>
<div class="r15" style="top:353px;height:15px;line-height:15px">
<span class="k" style="transform:scaleX(0.948);transform-origin:0 50%;left:40px">tag_id</span>
<span class="v" style="transform:scaleX(0.899);transform-origin:0 50%;">120</span>
</div>
<div class="r15" style="top:368px;height:15px;line-height:15px;background:#e9e7e3">
<span class="k" style="left:40px">length</span>
<span class="v" style="transform:scaleX(0.899);transform-origin:0 50%;">0.00015514200871555154</span>
</div>
<div class="r15" style="top:383px;height:15px;line-height:15px">
<span class="k" style="left:40px">length_m</span>
<span class="v" style="transform:scaleX(0.899);transform-origin:0 50%;">14.299405041940979</span>
</div>
<div class="r15" style="top:398px;height:15px;line-height:15px;background:#e9e7e3">
<span class="k" style="transform:scaleX(0.932);transform-origin:0 50%;left:40px">name</span>
<span class="v" style="transform:scaleX(0.969);transform-origin:0 50%;">TomioCart</span>
</div>
<div class="r15" style="top:413px;height:15px;line-height:15px">
<span class="k" style="transform:scaleX(0.971);transform-origin:0 50%;left:40px">source</span>
<span class="v" style="transform:scaleX(0.899);transform-origin:0 50%;">103</span>
</div>
<div class="r15" style="top:428px;height:15px;line-height:15px;background:#e9e7e3">
<span class="k" style="left:40px">target</span>
<span class="v" style="transform:scaleX(0.899);transform-origin:0 50%;">104</span>
</div>
<div class="r15" style="top:443px;height:15px;line-height:15px">
<span class="k" style="transform:scaleX(0.944);transform-origin:0 50%;left:40px">source_osm</span>
<span class="v" style="transform:scaleX(0.899);transform-origin:0 50%;">102169</span>
</div>
<div class="r15" style="top:458px;height:15px;line-height:15px;background:#e9e7e3">
<span class="k" style="transform:scaleX(0.960);transform-origin:0 50%;left:40px">target_osm</span>
<span class="v" style="transform:scaleX(0.899);transform-origin:0 50%;">102170</span>
</div>
<div class="r15" style="top:473px;height:15px;line-height:15px">
<span class="k" style="left:40px">cost</span>
<span class="v" style="transform:scaleX(0.909);transform-origin:0 50%;">1.5514200871555155e-05</span>
</div>
<div class="r15" style="top:488px;height:15px;line-height:15px;background:#e9e7e3">
<span class="k" style="transform:scaleX(0.929);transform-origin:0 50%;left:40px">reverse_cost</span>
<span class="v" style="transform:scaleX(0.909);transform-origin:0 50%;">1.5514200871555155e-05</span>
</div>
<div class="r15" style="top:503px;height:15px;line-height:15px">
<span class="k" style="transform:scaleX(0.923);transform-origin:0 50%;left:40px">cost_s</span>
<span class="v" style="transform:scaleX(0.899);transform-origin:0 50%;">1.0295571630197504</span>
</div>
<div class="r15" style="top:518px;height:15px;line-height:15px;background:#e9e7e3">
<span class="k" style="transform:scaleX(0.907);transform-origin:0 50%;left:40px">reverse_cost_s</span>
<span class="v" style="transform:scaleX(0.899);transform-origin:0 50%;">1.0295571630197504</span>
</div>
<div class="r15" style="top:533px;height:15px;line-height:15px">
<span class="k" style="left:40px">rule</span>
<span class="v" style="transform:scaleX(0.912);transform-origin:0 50%;">NULL</span>
</div>
<div class="r15" style="top:548px;height:15px;line-height:15px;background:#e9e7e3">
<span class="k" style="transform:scaleX(0.957);transform-origin:0 50%;left:40px">one_way</span>
<span class="v" style="transform:scaleX(0.897);transform-origin:0 50%;">0</span>
</div>
<div class="r15" style="top:563px;height:15px;line-height:15px">
<span class="k" style="left:40px">oneway</span>
<span class="v" style="transform:scaleX(0.963);transform-origin:0 50%;">UNKNOWN</span>
</div>
<div class="r15" style="top:578px;height:15px;line-height:15px;background:#e9e7e3">
<span class="k" style="transform:scaleX(0.946);transform-origin:0 50%;left:40px">x1</span>
<span class="v" style="transform:scaleX(0.899);transform-origin:0 50%;">139.62857391085</span>
</div>
<div class="r15" style="top:593px;height:15px;line-height:15px">
<span class="k" style="transform:scaleX(0.946);transform-origin:0 50%;left:40px">y1</span>
<span class="v" style="transform:scaleX(0.899);transform-origin:0 50%;">35.3673188847</span>
</div>
<div class="r15" style="top:608px;height:15px;line-height:15px;background:#e9e7e3">
<span class="k" style="transform:scaleX(0.946);transform-origin:0 50%;left:40px">x2</span>
<span class="v" style="transform:scaleX(0.899);transform-origin:0 50%;">139.62842336409</span>
</div>
<div class="r15" style="top:623px;height:15px;line-height:15px">
<span class="k" style="transform:scaleX(0.946);transform-origin:0 50%;left:40px">y2</span>
<span class="v" style="transform:scaleX(0.899);transform-origin:0 50%;">35.36728140516</span>
</div>
<div class="r15" style="top:638px;height:15px;line-height:15px;background:#e9e7e3">
<span class="k" style="transform:scaleX(0.970);transform-origin:0 50%;left:40px">maxspeed_forward</span>
<span class="v" style="transform:scaleX(0.898);transform-origin:0 50%;">50</span>
</div>
<div class="r15" style="top:653px;height:15px;line-height:15px">
<span class="k" style="transform:scaleX(0.961);transform-origin:0 50%;left:40px">maxspeed_backward</span>
<span class="v" style="transform:scaleX(0.898);transform-origin:0 50%;">50</span>
</div>
<div class="r15" style="top:668px;height:15px;line-height:15px;background:#e9e7e3">
<span class="k" style="transform:scaleX(1.055);transform-origin:0 50%;left:40px">priority</span>
<span class="v" style="transform:scaleX(0.897);transform-origin:0 50%;">5</span>
</div>
</div>
<div class="abs" style="transform:scaleX(0.692);transform-origin:0 50%;left:1519px;top:950px;line-height:14px;white-space:nowrap;font-size:13px">モード</div>
<div class="combo" style="left:1553px;top:946px;width:333px;height:24px"><span class="abs" style="transform:scaleX(0.797);transform-origin:0 50%;left:4px;top:3.500px;line-height:15px;white-space:nowrap;font-size:13px">現在のレイヤ</span><i class="dd" style="left:316.500px;top:8.500px"></i></div>
<div class="abs" style="transform:scaleX(0.636);transform-origin:0 50%;left:1519px;top:981px;line-height:14px;color:#9a9a9a;white-space:nowrap;font-size:13px">ビュー</div>
<div class="combo" style="left:1551px;top:978px;width:71px;height:22px;background:#f3f3f3;border-color:#c6c6c6"><span class="abs" style="transform:scaleX(0.674);transform-origin:0 50%;left:4px;top:3px;line-height:15px;color:#9a9a9a;white-space:nowrap;font-size:13px">ツリー</span><i class="dd dis" style="left:55px;top:8.5px"></i></div>
<div class="abs" style="left:0;top:0;width:1892px;height:1px;background:#1a1a1a"></div>
<div class="abs" style="left:0;top:0;width:1px;height:1008px;background:#111"></div>
<div class="abs" style="left:1891px;top:0;width:1px;height:1008px;background:#111"></div>
<div class="abs" style="left:1870px;top:968px;width:22px;height:40px;background:#111"></div>
<svg class="abs" style="left:1885px;top:980px" width="7" height="16" viewBox="0 0 7 16"><path d="M1 1.6 L7 0.9 V7.4 H1Z M1 8.4 H7 V14.9 L1 14.2Z" fill="#fff"/></svg>
</div></body></html>
